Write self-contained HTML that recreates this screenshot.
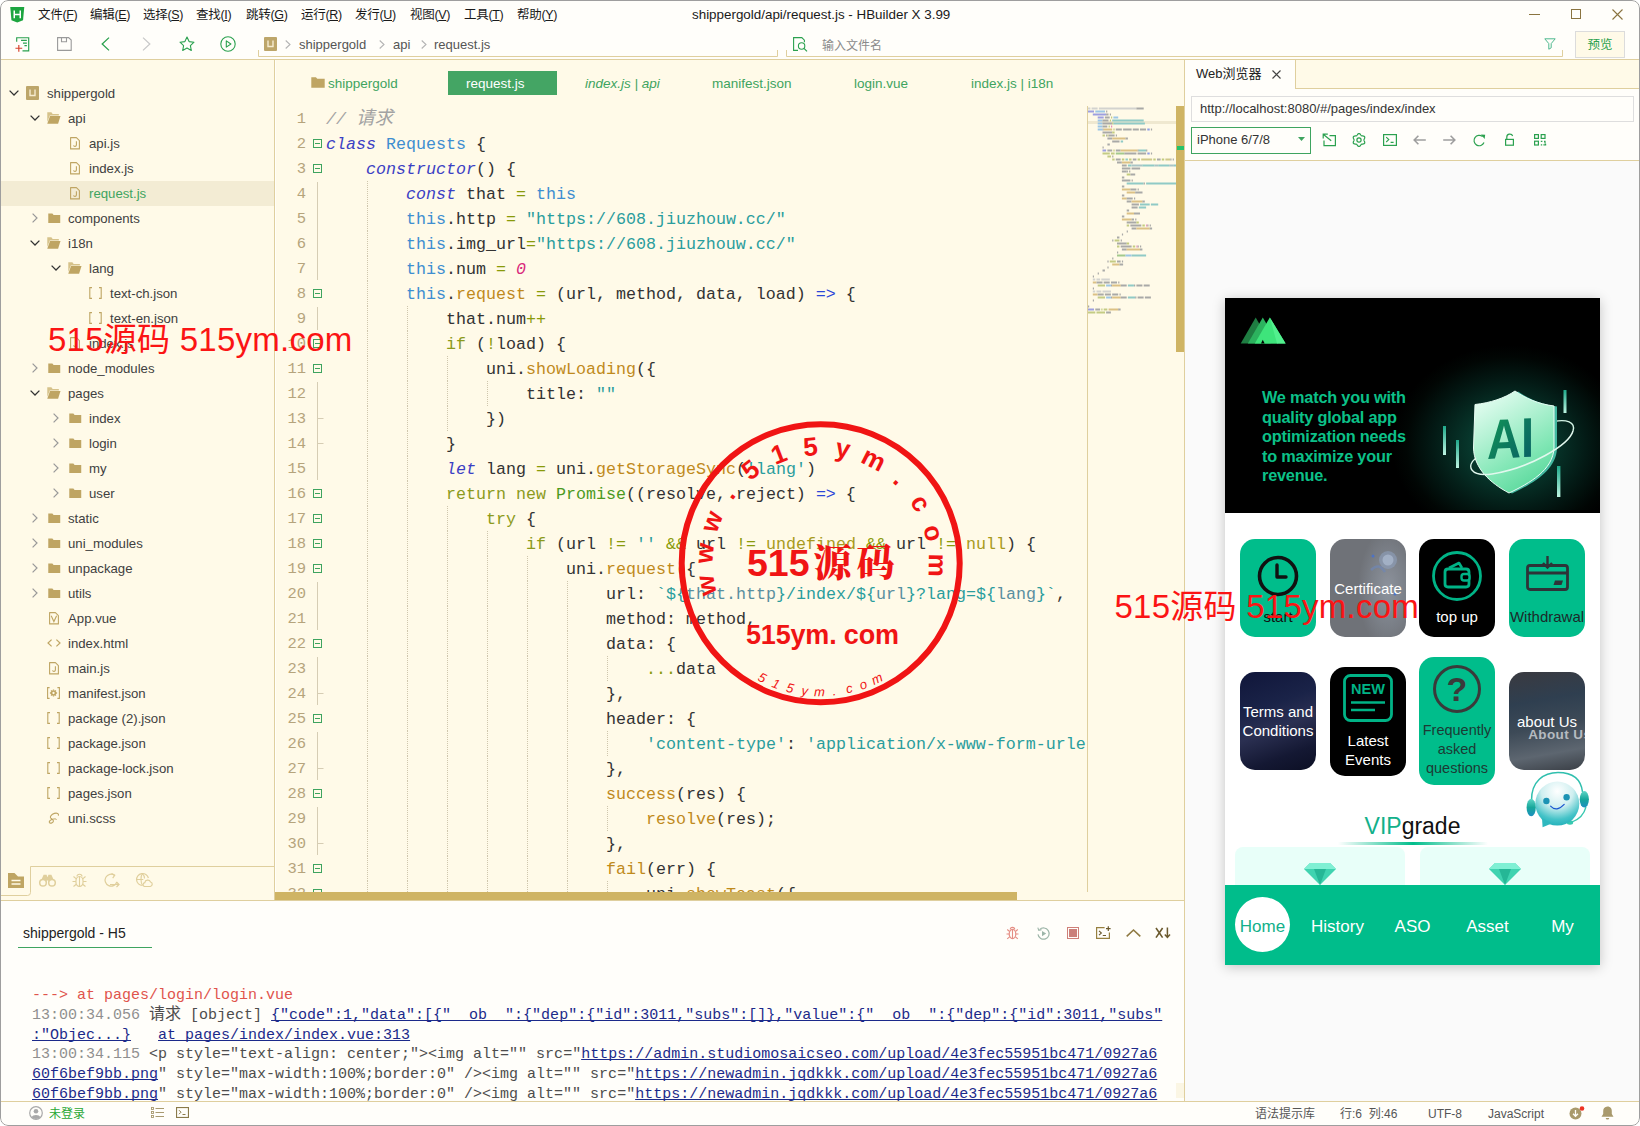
<!DOCTYPE html>
<html lang="zh"><head><meta charset="utf-8"><title>HBuilder X</title>
<style>
*{box-sizing:border-box;margin:0;padding:0}
html,body{width:1640px;height:1126px;overflow:hidden;background:#fff}
body{font-family:"Liberation Sans","Noto Sans CJK SC",sans-serif;font-size:13px;color:#333}
#win{position:relative;width:1640px;height:1126px;overflow:hidden;background:#fffefa;border-radius:8px}
.abs{position:absolute}
svg{position:absolute;overflow:visible}
/* top */
#titlebar{position:absolute;left:0;top:0;width:1640px;height:30px;background:#fffefa}
.menu{position:absolute;top:4px;font-size:12.5px;color:#1a1a1a;white-space:nowrap;letter-spacing:-0.3px}
#title{position:absolute;top:7px;left:692px;font-size:13.4px;color:#1a1a1a;white-space:nowrap}
#toolbar{position:absolute;left:0;top:30px;width:1640px;height:30px;background:#fffefa;border-bottom:1px solid #dfcf9e}
.crumb{position:absolute;top:37px;font-size:13px;color:#555;white-space:nowrap}
/* sidebar */
#sidebar{position:absolute;left:0;top:60px;width:275px;height:841px;background:#fffae8;border-right:1px solid #dfcf9e}
.tl{position:absolute;font-size:13.2px;line-height:25px;white-space:nowrap}
/* editor */
#editor{position:absolute;left:276px;top:60px;width:909px;height:841px;background:#fffae8}
.etab{position:absolute;top:71px;line-height:25px;font-size:13.5px;color:#3ea45f;white-space:nowrap}
#code{position:absolute;left:275px;top:106px;width:812px;height:786px;overflow:hidden;font-family:"Liberation Mono","Noto Sans CJK SC",monospace;font-size:16.67px;color:#333}
.ln{position:absolute;left:0;width:812px;height:25px;line-height:25px;white-space:pre}
.no{position:absolute;top:1px;left:0;width:31px;text-align:right;color:#b5a47c;font-size:15.5px}
.cd{position:absolute;top:1px}
.k{color:#3b3fc4;font-style:italic}
.c{color:#3e8ed0}
.o{color:#8a9a0a}
.f{color:#bf8a1c}
.s{color:#2a9d9d}
.s2{color:#5a8f9f}
.y{color:#8c9b1c}
.a{color:#2c46d8}
.n{color:#d9287c;font-style:italic}
.p{color:#4c9a1e}
.u{color:#a89a20}
.cm{color:#a3a3a3;font-style:italic}
/* browser */
#browser{position:absolute;left:1185px;top:60px;width:455px;height:1041px;background:#fffefa}
#phone{position:absolute;left:1225px;top:298px;width:375px;height:667px;background:#fff;overflow:hidden;box-shadow:0 2px 12px rgba(0,0,0,0.22)}
#phone svg{position:absolute}
.card{position:absolute;width:76px;height:98px;border-radius:15px}
.ct{position:absolute;width:76px;text-align:center;font-size:15px;line-height:19px;white-space:nowrap}
.nv{position:absolute;top:617px;width:75px;text-align:center;font-size:17px;line-height:24px;color:#fff}
/* console */
#console{position:absolute;left:0;top:900px;width:1184px;height:201px;background:#fffefa;border-top:1px solid #dfcf9e}
#log{position:absolute;left:32px;top:986px;width:1150px;font-family:"Liberation Mono","Noto Sans CJK SC",monospace;font-size:15px;line-height:19.75px;color:#4d4d4d}
#log div{height:19.75px;white-space:pre;overflow:visible}
.tm{color:#8f8f8f}
.lk{color:#1c2a8a;text-decoration:underline;text-decoration-skip-ink:none;text-underline-offset:1px}
#status{position:absolute;left:0;top:1101px;width:1640px;height:26px;background:#fffefa;border-top:1px solid #dfcf9e}
.st{position:absolute;top:1105px;font-size:12px;line-height:18px;color:#555;white-space:nowrap}
.wm{position:absolute;font-size:33px;line-height:44px;color:#fb1414;white-space:nowrap;letter-spacing:0.25px}

</style></head><body>
<div id="win">
<div id="titlebar">
<svg style="left:9.500px;top:7px" width="14.500" height="16" viewBox="0 0 14 16"><path d="M0 0h14l-1.2 13.2L7 15.6 1.2 13.2z" fill="#1da53f"/><path d="M4 3.6v7.6M10 3.6v7.6M4 7.4h6" stroke="#fff" stroke-width="1.5" fill="none"/></svg>
<span class="menu" style="left:38px">文件(<u>F</u>)</span>
<span class="menu" style="left:90px">编辑(<u>E</u>)</span>
<span class="menu" style="left:143px">选择(<u>S</u>)</span>
<span class="menu" style="left:196px">查找(<u>I</u>)</span>
<span class="menu" style="left:246px">跳转(<u>G</u>)</span>
<span class="menu" style="left:301px">运行(<u>R</u>)</span>
<span class="menu" style="left:355px">发行(<u>U</u>)</span>
<span class="menu" style="left:410px">视图(<u>V</u>)</span>
<span class="menu" style="left:464px">工具(<u>T</u>)</span>
<span class="menu" style="left:517px">帮助(<u>Y</u>)</span>
<span id="title">shippergold/api/request.js - HBuilder X 3.99</span>
<svg style="left:1529px;top:14px" width="11" height="1"><rect width="11" height="1" fill="#8a7440"/></svg>
<svg style="left:1571px;top:9px" width="10" height="10"><rect x="0.5" y="0.5" width="9" height="9" fill="none" stroke="#8a7440"/></svg>
<svg style="left:1612px;top:9px" width="11" height="11"><path d="M0.5 0.5l10 10M10.5 0.5l-10 10" stroke="#8a7440" stroke-width="1.1" fill="none"/></svg>
</div>
<div id="toolbar"></div>
<!-- toolbar icons -->
<svg style="left:15px;top:36.500px" width="15" height="15.500" viewBox="0 0 15 16"><path d="M1.5 5V0.8h12.4v13.6H7.5" fill="none" stroke="#2ba14f" stroke-width="1.2"/><path d="M6 3.6h6M8 6.4h4M9.5 9h2.5" stroke="#2ba14f" stroke-width="1.3" fill="none"/><path d="M0.2 11.6h7M3.7 8.2v7" stroke="#d8402c" stroke-width="1.2" fill="none"/></svg>
<svg style="left:57px;top:37px" width="15" height="14" viewBox="0 0 15 14"><path d="M0.6 0.6h11l2.6 2.4v10.4H0.6z" fill="none" stroke="#9a9a9a" stroke-width="1.1"/><path d="M4.5 0.6v4.2h5V0.6" fill="none" stroke="#9a9a9a" stroke-width="1.1"/></svg>
<svg style="left:101px;top:37px" width="9" height="14" viewBox="0 0 9 14"><path d="M8 0.6L1.2 7 8 13.4" fill="none" stroke="#2ba14f" stroke-width="1.3"/></svg>
<svg style="left:142px;top:37px" width="9" height="14" viewBox="0 0 9 14"><path d="M1 0.6L7.8 7 1 13.4" fill="none" stroke="#c9c9c9" stroke-width="1.3"/></svg>
<svg style="left:179px;top:36px" width="16" height="15" viewBox="0 0 16 15"><path d="M8 1l2.1 4.6 4.9.6-3.6 3.4.9 4.9L8 12.1l-4.3 2.4.9-4.9L1 6.2l4.9-.6z" fill="none" stroke="#2ba14f" stroke-width="1.1" stroke-linejoin="round"/></svg>
<svg style="left:220px;top:36px" width="16" height="16" viewBox="0 0 16 16"><circle cx="8" cy="8" r="7.2" fill="none" stroke="#2ba14f" stroke-width="1.1"/><path d="M6.3 4.9l4.6 3.1-4.6 3.1z" fill="none" stroke="#2ba14f" stroke-width="1.1" stroke-linejoin="round"/></svg>
<!-- breadcrumb -->
<svg style="left:258px;top:50px" width="520" height="7"><path d="M0.5 0v6.5h519V0" fill="none" stroke="#dfcf9e"/></svg>
<svg style="left:264px;top:37px" width="13" height="14"><rect width="13" height="14" rx="1" fill="#bda66a"/><path d="M4 3.5v6h5v-6" fill="none" stroke="#f6ecd0" stroke-width="1.4"/></svg>
<svg style="left:285px;top:40px" width="6" height="9" viewBox="0 0 6 9"><path d="M0.700 0.500L5 4.500 0.700 8.500" fill="none" stroke="#b4b4b4" stroke-width="1.100"/></svg>
<span class="crumb" style="left:299px">shippergold</span>
<svg style="left:379px;top:40px" width="6" height="9" viewBox="0 0 6 9"><path d="M0.700 0.500L5 4.500 0.700 8.500" fill="none" stroke="#b4b4b4" stroke-width="1.100"/></svg>
<span class="crumb" style="left:393px">api</span>
<svg style="left:421px;top:40px" width="6" height="9" viewBox="0 0 6 9"><path d="M0.700 0.500L5 4.500 0.700 8.500" fill="none" stroke="#b4b4b4" stroke-width="1.100"/></svg>
<span class="crumb" style="left:434px">request.js</span>
<!-- search -->
<svg style="left:786px;top:50px" width="777" height="7"><path d="M0.5 0v6.5h776V0" fill="none" stroke="#dfcf9e"/></svg>
<svg style="left:793px;top:37px" width="15" height="15" viewBox="0 0 15 15"><path d="M5 13.4H0.6V0.6h8.2l2.6 2.6v2" fill="none" stroke="#2ba14f" stroke-width="1.1"/><circle cx="8.6" cy="9" r="3.2" fill="none" stroke="#2ba14f" stroke-width="1.1"/><path d="M11 11.4l3 3" stroke="#2ba14f" stroke-width="1.2"/></svg>
<span class="crumb" style="left:822px;color:#8a8a8a;font-size:12px;top:36px">输入文件名</span>
<svg style="left:1544px;top:38px" width="12" height="12" viewBox="0 0 12 12"><path d="M0.8 0.8h10.4L7.2 5.6v4.2l-2.4 1.400V5.600z" fill="none" stroke="#4fb98f" stroke-width="1" stroke-linejoin="round"/></svg>
<div class="abs" style="left:1575px;top:31px;width:50px;height:27px;border:1px solid #dcdcdc;background:#fffae8;color:#2ba14f;font-size:12.5px;line-height:27px;text-align:center">预览</div>
<div id="sidebar"></div>
<svg style="left:9px;top:90px" width="10" height="6" viewBox="0 0 10 6"><path d="M0.6 0.6L5 5l4.4-4.4" fill="none" stroke="#333" stroke-width="1.3"/></svg>
<svg style="left:26px;top:86px" width="13" height="14"><rect width="13" height="14" rx="1" fill="#bda66a"/><path d="M4 3.5v6h5v-6" fill="none" stroke="#f6ecd0" stroke-width="1.4"/></svg>
<span class="tl" style="left:47px;top:81px;color:#404040">shippergold</span>
<svg style="left:30px;top:115px" width="10" height="6" viewBox="0 0 10 6"><path d="M0.6 0.6L5 5l4.4-4.4" fill="none" stroke="#333" stroke-width="1.3"/></svg>
<svg style="left:47px;top:112px" width="14" height="12" viewBox="0 0 15 11" preserveAspectRatio="none"><path d="M0.3 0.3h4.4l1.4 1.5h6.6v1.4H3l-2.7 6z" fill="#d6c28a"/><path d="M3.2 3.6h11.3l-2.6 7.1H0.3z" fill="#bfa563"/></svg>
<span class="tl" style="left:68px;top:106px;color:#404040">api</span>
<svg style="left:70px;top:137px" width="10" height="12.500" viewBox="0 0 10 12.500"><path d="M0.600 0.600h5.800l3 3v8.300H0.600z" fill="none" stroke="#bfa563" stroke-width="1.100" stroke-linejoin="round"/><path d="M6.400 4.200v3.900c0 1.500-2.300 1.700-3 .4" fill="none" stroke="#bfa563" stroke-width="1.100"/></svg>
<span class="tl" style="left:89px;top:131px;color:#404040">api.js</span>
<svg style="left:70px;top:162px" width="10" height="12.500" viewBox="0 0 10 12.500"><path d="M0.600 0.600h5.800l3 3v8.300H0.600z" fill="none" stroke="#bfa563" stroke-width="1.100" stroke-linejoin="round"/><path d="M6.400 4.200v3.900c0 1.500-2.300 1.700-3 .4" fill="none" stroke="#bfa563" stroke-width="1.100"/></svg>
<span class="tl" style="left:89px;top:156px;color:#404040">index.js</span>
<div class="abs" style="left:1px;top:181px;width:273px;height:25px;background:#f3ecd4"></div>
<svg style="left:70px;top:187px" width="10" height="12.500" viewBox="0 0 10 12.500"><path d="M0.600 0.600h5.800l3 3v8.300H0.600z" fill="none" stroke="#bfa563" stroke-width="1.100" stroke-linejoin="round"/><path d="M6.400 4.200v3.900c0 1.500-2.300 1.700-3 .4" fill="none" stroke="#bfa563" stroke-width="1.100"/></svg>
<span class="tl" style="left:89px;top:181px;color:#3ea45f">request.js</span>
<svg style="left:32px;top:213px" width="6" height="10" viewBox="0 0 6 10"><path d="M0.6 0.6L5 5 0.6 9.4" fill="none" stroke="#999" stroke-width="1.2"/></svg>
<svg style="left:48px;top:213px" width="12.500" height="10.500" viewBox="0 0 14 11"><path d="M0.3 0.3h4.6l1.4 1.5h7.4v8.9H0.3z" fill="#bfa563"/></svg>
<span class="tl" style="left:68px;top:206px;color:#404040">components</span>
<svg style="left:30px;top:240px" width="10" height="6" viewBox="0 0 10 6"><path d="M0.6 0.6L5 5l4.4-4.4" fill="none" stroke="#333" stroke-width="1.3"/></svg>
<svg style="left:47px;top:237px" width="14" height="12" viewBox="0 0 15 11" preserveAspectRatio="none"><path d="M0.3 0.3h4.4l1.4 1.5h6.6v1.4H3l-2.7 6z" fill="#d6c28a"/><path d="M3.2 3.6h11.3l-2.6 7.1H0.3z" fill="#bfa563"/></svg>
<span class="tl" style="left:68px;top:231px;color:#404040">i18n</span>
<svg style="left:51px;top:265px" width="10" height="6" viewBox="0 0 10 6"><path d="M0.6 0.6L5 5l4.4-4.4" fill="none" stroke="#333" stroke-width="1.3"/></svg>
<svg style="left:68px;top:262px" width="14" height="12" viewBox="0 0 15 11" preserveAspectRatio="none"><path d="M0.3 0.3h4.4l1.4 1.5h6.6v1.4H3l-2.7 6z" fill="#d6c28a"/><path d="M3.2 3.6h11.3l-2.6 7.1H0.3z" fill="#bfa563"/></svg>
<span class="tl" style="left:89px;top:256px;color:#404040">lang</span>
<svg style="left:89px;top:287px" width="13" height="12" viewBox="0 0 13 12"><path d="M3 0.6H0.8v10.8H3M10 0.6h2.2v10.8H10" fill="none" stroke="#bfa563" stroke-width="1.1"/></svg>
<span class="tl" style="left:110px;top:281px;color:#404040">text-ch.json</span>
<svg style="left:89px;top:312px" width="13" height="12" viewBox="0 0 13 12"><path d="M3 0.6H0.8v10.8H3M10 0.6h2.2v10.8H10" fill="none" stroke="#bfa563" stroke-width="1.1"/></svg>
<span class="tl" style="left:110px;top:306px;color:#404040">text-en.json</span>
<svg style="left:70px;top:337px" width="10" height="12.500" viewBox="0 0 10 12.500"><path d="M0.600 0.600h5.800l3 3v8.300H0.600z" fill="none" stroke="#bfa563" stroke-width="1.100" stroke-linejoin="round"/><path d="M6.400 4.200v3.900c0 1.500-2.300 1.700-3 .4" fill="none" stroke="#bfa563" stroke-width="1.100"/></svg>
<span class="tl" style="left:89px;top:331px;color:#404040">index.js</span>
<svg style="left:32px;top:363px" width="6" height="10" viewBox="0 0 6 10"><path d="M0.6 0.6L5 5 0.6 9.4" fill="none" stroke="#999" stroke-width="1.2"/></svg>
<svg style="left:48px;top:363px" width="12.500" height="10.500" viewBox="0 0 14 11"><path d="M0.3 0.3h4.6l1.4 1.5h7.4v8.9H0.3z" fill="#bfa563"/></svg>
<span class="tl" style="left:68px;top:356px;color:#404040">node_modules</span>
<svg style="left:30px;top:390px" width="10" height="6" viewBox="0 0 10 6"><path d="M0.6 0.6L5 5l4.4-4.4" fill="none" stroke="#333" stroke-width="1.3"/></svg>
<svg style="left:47px;top:387px" width="14" height="12" viewBox="0 0 15 11" preserveAspectRatio="none"><path d="M0.3 0.3h4.4l1.4 1.5h6.6v1.4H3l-2.7 6z" fill="#d6c28a"/><path d="M3.2 3.6h11.3l-2.6 7.1H0.3z" fill="#bfa563"/></svg>
<span class="tl" style="left:68px;top:381px;color:#404040">pages</span>
<svg style="left:53px;top:413px" width="6" height="10" viewBox="0 0 6 10"><path d="M0.6 0.6L5 5 0.6 9.4" fill="none" stroke="#999" stroke-width="1.2"/></svg>
<svg style="left:69px;top:413px" width="12.500" height="10.500" viewBox="0 0 14 11"><path d="M0.3 0.3h4.6l1.4 1.5h7.4v8.9H0.3z" fill="#bfa563"/></svg>
<span class="tl" style="left:89px;top:406px;color:#404040">index</span>
<svg style="left:53px;top:438px" width="6" height="10" viewBox="0 0 6 10"><path d="M0.6 0.6L5 5 0.6 9.4" fill="none" stroke="#999" stroke-width="1.2"/></svg>
<svg style="left:69px;top:438px" width="12.500" height="10.500" viewBox="0 0 14 11"><path d="M0.3 0.3h4.6l1.4 1.5h7.4v8.9H0.3z" fill="#bfa563"/></svg>
<span class="tl" style="left:89px;top:431px;color:#404040">login</span>
<svg style="left:53px;top:463px" width="6" height="10" viewBox="0 0 6 10"><path d="M0.6 0.6L5 5 0.6 9.4" fill="none" stroke="#999" stroke-width="1.2"/></svg>
<svg style="left:69px;top:463px" width="12.500" height="10.500" viewBox="0 0 14 11"><path d="M0.3 0.3h4.6l1.4 1.5h7.4v8.9H0.3z" fill="#bfa563"/></svg>
<span class="tl" style="left:89px;top:456px;color:#404040">my</span>
<svg style="left:53px;top:488px" width="6" height="10" viewBox="0 0 6 10"><path d="M0.6 0.6L5 5 0.6 9.4" fill="none" stroke="#999" stroke-width="1.2"/></svg>
<svg style="left:69px;top:488px" width="12.500" height="10.500" viewBox="0 0 14 11"><path d="M0.3 0.3h4.6l1.4 1.5h7.4v8.9H0.3z" fill="#bfa563"/></svg>
<span class="tl" style="left:89px;top:481px;color:#404040">user</span>
<svg style="left:32px;top:513px" width="6" height="10" viewBox="0 0 6 10"><path d="M0.6 0.6L5 5 0.6 9.4" fill="none" stroke="#999" stroke-width="1.2"/></svg>
<svg style="left:48px;top:513px" width="12.500" height="10.500" viewBox="0 0 14 11"><path d="M0.3 0.3h4.6l1.4 1.5h7.4v8.9H0.3z" fill="#bfa563"/></svg>
<span class="tl" style="left:68px;top:506px;color:#404040">static</span>
<svg style="left:32px;top:538px" width="6" height="10" viewBox="0 0 6 10"><path d="M0.6 0.6L5 5 0.6 9.4" fill="none" stroke="#999" stroke-width="1.2"/></svg>
<svg style="left:48px;top:538px" width="12.500" height="10.500" viewBox="0 0 14 11"><path d="M0.3 0.3h4.6l1.4 1.5h7.4v8.9H0.3z" fill="#bfa563"/></svg>
<span class="tl" style="left:68px;top:531px;color:#404040">uni_modules</span>
<svg style="left:32px;top:563px" width="6" height="10" viewBox="0 0 6 10"><path d="M0.6 0.6L5 5 0.6 9.4" fill="none" stroke="#999" stroke-width="1.2"/></svg>
<svg style="left:48px;top:563px" width="12.500" height="10.500" viewBox="0 0 14 11"><path d="M0.3 0.3h4.6l1.4 1.5h7.4v8.9H0.3z" fill="#bfa563"/></svg>
<span class="tl" style="left:68px;top:556px;color:#404040">unpackage</span>
<svg style="left:32px;top:588px" width="6" height="10" viewBox="0 0 6 10"><path d="M0.6 0.6L5 5 0.6 9.4" fill="none" stroke="#999" stroke-width="1.2"/></svg>
<svg style="left:48px;top:588px" width="12.500" height="10.500" viewBox="0 0 14 11"><path d="M0.3 0.3h4.6l1.4 1.5h7.4v8.9H0.3z" fill="#bfa563"/></svg>
<span class="tl" style="left:68px;top:581px;color:#404040">utils</span>
<svg style="left:49px;top:612px" width="10" height="12.500" viewBox="0 0 10 12.500"><path d="M0.600 0.600h5.800l3 3v8.300H0.600z" fill="none" stroke="#bfa563" stroke-width="1.100" stroke-linejoin="round"/><path d="M2.200 3.800l2.700 5.800 2.700-5.800" fill="none" stroke="#bfa563" stroke-width="1.100"/></svg>
<span class="tl" style="left:68px;top:606px;color:#404040">App.vue</span>
<svg style="left:47px;top:639px" width="14" height="8" viewBox="0 0 14 8"><path d="M4.6 0.6L1 4l3.6 3.4M9.4 0.6L13 4 9.4 7.4" fill="none" stroke="#bfa563" stroke-width="1.2"/></svg>
<span class="tl" style="left:68px;top:631px;color:#404040">index.html</span>
<svg style="left:49px;top:662px" width="10" height="12.500" viewBox="0 0 10 12.500"><path d="M0.600 0.600h5.800l3 3v8.300H0.600z" fill="none" stroke="#bfa563" stroke-width="1.100" stroke-linejoin="round"/><path d="M6.400 4.200v3.900c0 1.500-2.300 1.700-3 .4" fill="none" stroke="#bfa563" stroke-width="1.100"/></svg>
<span class="tl" style="left:68px;top:656px;color:#404040">main.js</span>
<svg style="left:47px;top:687px" width="13" height="12" viewBox="0 0 13 12"><path d="M2.600 0.600H0.600v10.800h2M10.400 0.600h2v10.800h-2" fill="none" stroke="#bfa563" stroke-width="1.100"/><circle cx="6.500" cy="6" r="1.900" fill="none" stroke="#bfa563" stroke-width="1.500"/><path d="M6.500 2.400v1.200M6.500 8.400v1.200M2.900 6h1.200M8.900 6h1.200M4 3.500l.9.900M8.100 7.600l.9.900M9 3.500l-.9.900M4.900 7.600l-.9.900" stroke="#bfa563" stroke-width="1.300"/></svg>
<span class="tl" style="left:68px;top:681px;color:#404040">manifest.json</span>
<svg style="left:47px;top:712px" width="13" height="12" viewBox="0 0 13 12"><path d="M3 0.6H0.8v10.8H3M10 0.6h2.2v10.8H10" fill="none" stroke="#bfa563" stroke-width="1.1"/></svg>
<span class="tl" style="left:68px;top:706px;color:#404040">package (2).json</span>
<svg style="left:47px;top:737px" width="13" height="12" viewBox="0 0 13 12"><path d="M3 0.6H0.8v10.8H3M10 0.6h2.2v10.8H10" fill="none" stroke="#bfa563" stroke-width="1.1"/></svg>
<span class="tl" style="left:68px;top:731px;color:#404040">package.json</span>
<svg style="left:47px;top:762px" width="13" height="12" viewBox="0 0 13 12"><path d="M3 0.6H0.8v10.8H3M10 0.6h2.2v10.8H10" fill="none" stroke="#bfa563" stroke-width="1.1"/></svg>
<span class="tl" style="left:68px;top:756px;color:#404040">package-lock.json</span>
<svg style="left:47px;top:787px" width="13" height="12" viewBox="0 0 13 12"><path d="M3 0.6H0.8v10.8H3M10 0.6h2.2v10.8H10" fill="none" stroke="#bfa563" stroke-width="1.1"/></svg>
<span class="tl" style="left:68px;top:781px;color:#404040">pages.json</span>
<svg style="left:47px;top:812px" width="13" height="13" viewBox="0 0 13 13"><path d="M11.4 3.2c.6-1.6-1.4-2.6-4-1.8-2.8.9-5 3.2-3.6 4.7 1 1 2.6 1.4 2.6 2.8 0 1.4-2.2 2.6-3.6 2-1.2-.6-.2-2.4 1.6-3.2" fill="none" stroke="#bfa563" stroke-width="1.1" stroke-linecap="round"/><path d="M5 7.5c2-.9 4.200-.7 4.600 0" fill="none" stroke="#bfa563" stroke-width="1"/></svg>
<span class="tl" style="left:68px;top:806px;color:#404040">uni.scss</span>
<svg style="left:0;top:866px" width="276" height="31"><path d="M0 29.5h27.500q3 0 3-3V0.5H275" fill="none" stroke="#dfcf9e"/></svg>
<svg style="left:8px;top:873px" width="16" height="15" viewBox="0 0 16 15"><path d="M0 0h6.500l3.500 3.500h6V15H0z" fill="#bfa563"/><path d="M3.500 7.500h9M3.500 11h9" stroke="#fffae8" stroke-width="1.600"/></svg>
<svg style="left:39px;top:874px" width="17" height="13" viewBox="0 0 17 13"><path d="M2.500 5.500L4.600 0.800h3l.6 2h.6l.6-2h3l2.100 4.700v3h-5.200V6.500H7.700v2H2.500z" fill="#e0cf9c"/><circle cx="4" cy="8.800" r="3.300" fill="#fffae8" stroke="#e0cf9c" stroke-width="1.500"/><circle cx="13" cy="8.800" r="3.300" fill="#fffae8" stroke="#e0cf9c" stroke-width="1.500"/></svg>
<svg style="left:72px;top:873px" width="15" height="15" viewBox="0 0 15 15"><ellipse cx="7.500" cy="8.500" rx="3.600" ry="5" fill="none" stroke="#e0cf9c" stroke-width="1.200"/><path d="M7.500 4v9.500M5 3.500c0-3 5-3 5 0M0.500 8.500h3.400M11.100 8.500h3.400M1.500 3.500l2.800 2.300M13.500 3.500l-2.800 2.300M1.500 13.500l2.800-2.300M13.500 13.500l-2.800-2.300" fill="none" stroke="#e0cf9c" stroke-width="1.100"/></svg>
<svg style="left:104px;top:873px" width="16" height="15" viewBox="0 0 16 15"><path d="M10.500 2.200A6 6 0 1 0 12.800 9" fill="none" stroke="#e0cf9c" stroke-width="1.200"/><path d="M7.500 0.600l3.200 1.700-2 2.800" fill="none" stroke="#e0cf9c" stroke-width="1.200"/><path d="M6 11.500h9M12.500 9l2.500 2.500-2.500 2.500" fill="none" stroke="#e0cf9c" stroke-width="1.200"/></svg>
<svg style="left:136px;top:873px" width="17" height="15" viewBox="0 0 17 15"><path d="M6.500 12.500A6 6 0 1 1 12.400 5" fill="none" stroke="#e0cf9c" stroke-width="1.200"/><path d="M0.800 6.500h6.500M6.500 0.600c-2 2-2 9.500 0 11.500M6.500 0.600c1.500 1.500 2 3.500 2 5" fill="none" stroke="#e0cf9c" stroke-width="1.100"/><path d="M8.500 13.500h5.800a2.300 2.300 0 0 0 .2-4.500 3 3 0 0 0-5.700.6 2 2 0 0 0-.3 3.900z" fill="#fffae8" stroke="#e0cf9c" stroke-width="1.200"/></svg>
<div id="editor"></div>
<svg style="left:311px;top:77px" width="14" height="11" viewBox="0 0 14 11"><path d="M0.3 0.3h4.600l1.400 1.500h7.400v8.900H0.300z" fill="#bfa563"/></svg>
<span class="etab" style="left:328px">shippergold</span>
<div class="abs" style="left:448px;top:71px;width:109px;height:24px;background:#44a564"></div>
<span class="etab" style="left:466px;color:#fff">request.js</span>
<span class="etab" style="left:585px;font-style:italic">index.js | api</span>
<span class="etab" style="left:712px">manifest.json</span>
<span class="etab" style="left:854px">login.vue</span>
<span class="etab" style="left:971px">index.js | i18n</span>
<div id="code">
<div class="ln" style="top:0px"><span class="no">1</span><span class="cd" style="left:51px"><span class="cm">// <span style="font-size:18.500px">请求</span></span></span></div>
<div class="ln" style="top:25px"><span class="no">2</span><span class="cd" style="left:51px"><span class="k">class</span> <span class="c">Requests</span> {</span></div>
<div class="ln" style="top:50px"><span class="no">3</span><span class="cd" style="left:91px"><span class="k">constructor</span>() {</span></div>
<div class="ln" style="top:75px"><span class="no">4</span><span class="cd" style="left:131px"><span class="k">const</span> that <span class="o">=</span> <span class="c">this</span></span></div>
<div class="ln" style="top:100px"><span class="no">5</span><span class="cd" style="left:131px"><span class="c">this</span>.http <span class="o">=</span> <span class="s">&quot;https://608.jiuzhouw.cc/&quot;</span></span></div>
<div class="ln" style="top:125px"><span class="no">6</span><span class="cd" style="left:131px"><span class="c">this</span>.img_url<span class="o">=</span><span class="s">&quot;https://608.jiuzhouw.cc/&quot;</span></span></div>
<div class="ln" style="top:150px"><span class="no">7</span><span class="cd" style="left:131px"><span class="c">this</span>.num <span class="o">=</span> <span class="n">0</span></span></div>
<div class="ln" style="top:175px"><span class="no">8</span><span class="cd" style="left:131px"><span class="c">this</span>.<span class="f">request</span> <span class="o">=</span> (url, method, data, load) <span class="a">=&gt;</span> {</span></div>
<div class="ln" style="top:200px"><span class="no">9</span><span class="cd" style="left:171px">that.num<span class="o">++</span></span></div>
<div class="ln" style="top:225px"><span class="no">10</span><span class="cd" style="left:171px"><span class="y">if</span> (<span class="o">!</span>load) {</span></div>
<div class="ln" style="top:250px"><span class="no">11</span><span class="cd" style="left:211px">uni.<span class="f">showLoading</span>({</span></div>
<div class="ln" style="top:275px"><span class="no">12</span><span class="cd" style="left:251px">title: <span class="s">&quot;&quot;</span></span></div>
<div class="ln" style="top:300px"><span class="no">13</span><span class="cd" style="left:211px">})</span></div>
<div class="ln" style="top:325px"><span class="no">14</span><span class="cd" style="left:171px">}</span></div>
<div class="ln" style="top:350px"><span class="no">15</span><span class="cd" style="left:171px"><span class="k">let</span> lang <span class="o">=</span> uni.<span class="f">getStorageSync</span>(<span class="s">&#x27;lang&#x27;</span>)</span></div>
<div class="ln" style="top:375px"><span class="no">16</span><span class="cd" style="left:171px"><span class="y">return</span> <span class="y">new</span> <span class="p">Promise</span>((resolve, reject) <span class="a">=&gt;</span> {</span></div>
<div class="ln" style="top:400px"><span class="no">17</span><span class="cd" style="left:211px"><span class="y">try</span> {</span></div>
<div class="ln" style="top:425px"><span class="no">18</span><span class="cd" style="left:251px"><span class="y">if</span> (url <span class="o">!=</span> <span class="s">&#x27;&#x27;</span> <span class="o">&amp;&amp;</span> url <span class="o">!=</span> <span class="u">undefined</span> <span class="o">&amp;&amp;</span> url <span class="o">!=</span> <span class="u">null</span>) {</span></div>
<div class="ln" style="top:450px"><span class="no">19</span><span class="cd" style="left:291px">uni.<span class="f">request</span>({</span></div>
<div class="ln" style="top:475px"><span class="no">20</span><span class="cd" style="left:331px">url: <span class="s">`${</span><span class="s2">that.http</span><span class="s">}/index/${</span><span class="s2">url</span><span class="s">}?lang=${</span><span class="s2">lang</span><span class="s">}`</span>,</span></div>
<div class="ln" style="top:500px"><span class="no">21</span><span class="cd" style="left:331px">method: method,</span></div>
<div class="ln" style="top:525px"><span class="no">22</span><span class="cd" style="left:331px">data<span class="d">:</span> {</span></div>
<div class="ln" style="top:550px"><span class="no">23</span><span class="cd" style="left:371px"><span class="o">...</span>data</span></div>
<div class="ln" style="top:575px"><span class="no">24</span><span class="cd" style="left:331px">},</span></div>
<div class="ln" style="top:600px"><span class="no">25</span><span class="cd" style="left:331px">header: {</span></div>
<div class="ln" style="top:625px"><span class="no">26</span><span class="cd" style="left:371px"><span class="s">&#x27;content-type&#x27;</span>: <span class="s">&#x27;application/x-www-form-urle</span></span></div>
<div class="ln" style="top:650px"><span class="no">27</span><span class="cd" style="left:331px">},</span></div>
<div class="ln" style="top:675px"><span class="no">28</span><span class="cd" style="left:331px"><span class="f">success</span>(res) {</span></div>
<div class="ln" style="top:700px"><span class="no">29</span><span class="cd" style="left:371px"><span class="f">resolve</span>(res);</span></div>
<div class="ln" style="top:725px"><span class="no">30</span><span class="cd" style="left:331px">},</span></div>
<div class="ln" style="top:750px"><span class="no">31</span><span class="cd" style="left:331px"><span class="f">fail</span>(err) {</span></div>
<div class="ln" style="top:775px"><span class="no">32</span><span class="cd" style="left:371px">uni.<span class="f">showToast</span>({</span></div>
</div>
<svg style="left:275px;top:106px" width="812" height="786" viewBox="0 0 812 786"><rect x="38.500" y="33.5" width="8" height="8" fill="#fffae8" stroke="#3ea45f"/><path d="M40 37.5h5" stroke="#3ea45f"/><rect x="38.500" y="58.5" width="8" height="8" fill="#fffae8" stroke="#3ea45f"/><path d="M40 62.5h5" stroke="#3ea45f"/><path d="M42.500 76V100" stroke="#d6cdb4"/><path d="M42.500 100V125" stroke="#d6cdb4"/><path d="M42.500 125V150" stroke="#d6cdb4"/><path d="M42.500 150V174" stroke="#d6cdb4"/><rect x="38.500" y="183.5" width="8" height="8" fill="#fffae8" stroke="#3ea45f"/><path d="M40 187.5h5" stroke="#3ea45f"/><path d="M42.500 201V224" stroke="#d6cdb4"/><rect x="38.500" y="233.5" width="8" height="8" fill="#fffae8" stroke="#3ea45f"/><path d="M40 237.5h5" stroke="#3ea45f"/><rect x="38.500" y="258.5" width="8" height="8" fill="#fffae8" stroke="#3ea45f"/><path d="M40 262.5h5" stroke="#3ea45f"/><path d="M42.500 276V300" stroke="#d6cdb4"/><path d="M42.500 300V325" stroke="#d6cdb4"/><path d="M42.500 312.5h6" stroke="#d6cdb4"/><path d="M42.500 325V350" stroke="#d6cdb4"/><path d="M42.500 337.5h6" stroke="#d6cdb4"/><path d="M42.500 350V374" stroke="#d6cdb4"/><rect x="38.500" y="383.5" width="8" height="8" fill="#fffae8" stroke="#3ea45f"/><path d="M40 387.5h5" stroke="#3ea45f"/><rect x="38.500" y="408.5" width="8" height="8" fill="#fffae8" stroke="#3ea45f"/><path d="M40 412.5h5" stroke="#3ea45f"/><rect x="38.500" y="433.5" width="8" height="8" fill="#fffae8" stroke="#3ea45f"/><path d="M40 437.5h5" stroke="#3ea45f"/><rect x="38.500" y="458.5" width="8" height="8" fill="#fffae8" stroke="#3ea45f"/><path d="M40 462.5h5" stroke="#3ea45f"/><path d="M42.500 476V500" stroke="#d6cdb4"/><path d="M42.500 500V524" stroke="#d6cdb4"/><rect x="38.500" y="533.5" width="8" height="8" fill="#fffae8" stroke="#3ea45f"/><path d="M40 537.5h5" stroke="#3ea45f"/><path d="M42.500 551V575" stroke="#d6cdb4"/><path d="M42.500 575V599" stroke="#d6cdb4"/><path d="M42.500 587.5h6" stroke="#d6cdb4"/><rect x="38.500" y="608.5" width="8" height="8" fill="#fffae8" stroke="#3ea45f"/><path d="M40 612.5h5" stroke="#3ea45f"/><path d="M42.500 626V650" stroke="#d6cdb4"/><path d="M42.500 650V674" stroke="#d6cdb4"/><path d="M42.500 662.5h6" stroke="#d6cdb4"/><rect x="38.500" y="683.5" width="8" height="8" fill="#fffae8" stroke="#3ea45f"/><path d="M40 687.5h5" stroke="#3ea45f"/><path d="M42.500 701V725" stroke="#d6cdb4"/><path d="M42.500 725V749" stroke="#d6cdb4"/><path d="M42.500 737.5h6" stroke="#d6cdb4"/><rect x="38.500" y="758.5" width="8" height="8" fill="#fffae8" stroke="#3ea45f"/><path d="M40 762.5h5" stroke="#3ea45f"/><rect x="38.500" y="783.5" width="8" height="8" fill="#fffae8" stroke="#3ea45f"/><path d="M40 787.5h5" stroke="#3ea45f"/><path d="M92.5 75v25" stroke="#cfc6ad" stroke-dasharray="1 1"/><path d="M92.5 100v25" stroke="#cfc6ad" stroke-dasharray="1 1"/><path d="M92.5 125v25" stroke="#cfc6ad" stroke-dasharray="1 1"/><path d="M92.5 150v25" stroke="#cfc6ad" stroke-dasharray="1 1"/><path d="M92.5 175v25" stroke="#cfc6ad" stroke-dasharray="1 1"/><path d="M92.5 200v25" stroke="#cfc6ad" stroke-dasharray="1 1"/><path d="M132.5 200v25" stroke="#cfc6ad" stroke-dasharray="1 1"/><path d="M92.5 225v25" stroke="#cfc6ad" stroke-dasharray="1 1"/><path d="M132.5 225v25" stroke="#cfc6ad" stroke-dasharray="1 1"/><path d="M92.5 250v25" stroke="#cfc6ad" stroke-dasharray="1 1"/><path d="M132.5 250v25" stroke="#cfc6ad" stroke-dasharray="1 1"/><path d="M172.5 250v25" stroke="#cfc6ad" stroke-dasharray="1 1"/><path d="M92.5 275v25" stroke="#cfc6ad" stroke-dasharray="1 1"/><path d="M132.5 275v25" stroke="#cfc6ad" stroke-dasharray="1 1"/><path d="M172.5 275v25" stroke="#cfc6ad" stroke-dasharray="1 1"/><path d="M212.5 275v25" stroke="#cfc6ad" stroke-dasharray="1 1"/><path d="M92.5 300v25" stroke="#cfc6ad" stroke-dasharray="1 1"/><path d="M132.5 300v25" stroke="#cfc6ad" stroke-dasharray="1 1"/><path d="M172.5 300v25" stroke="#cfc6ad" stroke-dasharray="1 1"/><path d="M92.5 325v25" stroke="#cfc6ad" stroke-dasharray="1 1"/><path d="M132.5 325v25" stroke="#cfc6ad" stroke-dasharray="1 1"/><path d="M92.5 350v25" stroke="#cfc6ad" stroke-dasharray="1 1"/><path d="M132.5 350v25" stroke="#cfc6ad" stroke-dasharray="1 1"/><path d="M92.5 375v25" stroke="#cfc6ad" stroke-dasharray="1 1"/><path d="M132.5 375v25" stroke="#cfc6ad" stroke-dasharray="1 1"/><path d="M92.5 400v25" stroke="#cfc6ad" stroke-dasharray="1 1"/><path d="M132.5 400v25" stroke="#cfc6ad" stroke-dasharray="1 1"/><path d="M172.5 400v25" stroke="#cfc6ad" stroke-dasharray="1 1"/><path d="M92.5 425v25" stroke="#cfc6ad" stroke-dasharray="1 1"/><path d="M132.5 425v25" stroke="#cfc6ad" stroke-dasharray="1 1"/><path d="M172.5 425v25" stroke="#cfc6ad" stroke-dasharray="1 1"/><path d="M212.5 425v25" stroke="#cfc6ad" stroke-dasharray="1 1"/><path d="M92.5 450v25" stroke="#cfc6ad" stroke-dasharray="1 1"/><path d="M132.5 450v25" stroke="#cfc6ad" stroke-dasharray="1 1"/><path d="M172.5 450v25" stroke="#cfc6ad" stroke-dasharray="1 1"/><path d="M212.5 450v25" stroke="#cfc6ad" stroke-dasharray="1 1"/><path d="M252.5 450v25" stroke="#cfc6ad" stroke-dasharray="1 1"/><path d="M92.5 475v25" stroke="#cfc6ad" stroke-dasharray="1 1"/><path d="M132.5 475v25" stroke="#cfc6ad" stroke-dasharray="1 1"/><path d="M172.5 475v25" stroke="#cfc6ad" stroke-dasharray="1 1"/><path d="M212.5 475v25" stroke="#cfc6ad" stroke-dasharray="1 1"/><path d="M252.5 475v25" stroke="#cfc6ad" stroke-dasharray="1 1"/><path d="M292.5 475v25" stroke="#cfc6ad" stroke-dasharray="1 1"/><path d="M92.5 500v25" stroke="#cfc6ad" stroke-dasharray="1 1"/><path d="M132.5 500v25" stroke="#cfc6ad" stroke-dasharray="1 1"/><path d="M172.5 500v25" stroke="#cfc6ad" stroke-dasharray="1 1"/><path d="M212.5 500v25" stroke="#cfc6ad" stroke-dasharray="1 1"/><path d="M252.5 500v25" stroke="#cfc6ad" stroke-dasharray="1 1"/><path d="M292.5 500v25" stroke="#cfc6ad" stroke-dasharray="1 1"/><path d="M92.5 525v25" stroke="#cfc6ad" stroke-dasharray="1 1"/><path d="M132.5 525v25" stroke="#cfc6ad" stroke-dasharray="1 1"/><path d="M172.5 525v25" stroke="#cfc6ad" stroke-dasharray="1 1"/><path d="M212.5 525v25" stroke="#cfc6ad" stroke-dasharray="1 1"/><path d="M252.5 525v25" stroke="#cfc6ad" stroke-dasharray="1 1"/><path d="M292.5 525v25" stroke="#cfc6ad" stroke-dasharray="1 1"/><path d="M92.5 550v25" stroke="#cfc6ad" stroke-dasharray="1 1"/><path d="M132.5 550v25" stroke="#cfc6ad" stroke-dasharray="1 1"/><path d="M172.5 550v25" stroke="#cfc6ad" stroke-dasharray="1 1"/><path d="M212.5 550v25" stroke="#cfc6ad" stroke-dasharray="1 1"/><path d="M252.5 550v25" stroke="#cfc6ad" stroke-dasharray="1 1"/><path d="M292.5 550v25" stroke="#cfc6ad" stroke-dasharray="1 1"/><path d="M332.5 550v25" stroke="#cfc6ad" stroke-dasharray="1 1"/><path d="M92.5 575v25" stroke="#cfc6ad" stroke-dasharray="1 1"/><path d="M132.5 575v25" stroke="#cfc6ad" stroke-dasharray="1 1"/><path d="M172.5 575v25" stroke="#cfc6ad" stroke-dasharray="1 1"/><path d="M212.5 575v25" stroke="#cfc6ad" stroke-dasharray="1 1"/><path d="M252.5 575v25" stroke="#cfc6ad" stroke-dasharray="1 1"/><path d="M292.5 575v25" stroke="#cfc6ad" stroke-dasharray="1 1"/><path d="M92.5 600v25" stroke="#cfc6ad" stroke-dasharray="1 1"/><path d="M132.5 600v25" stroke="#cfc6ad" stroke-dasharray="1 1"/><path d="M172.5 600v25" stroke="#cfc6ad" stroke-dasharray="1 1"/><path d="M212.5 600v25" stroke="#cfc6ad" stroke-dasharray="1 1"/><path d="M252.5 600v25" stroke="#cfc6ad" stroke-dasharray="1 1"/><path d="M292.5 600v25" stroke="#cfc6ad" stroke-dasharray="1 1"/><path d="M92.5 625v25" stroke="#cfc6ad" stroke-dasharray="1 1"/><path d="M132.5 625v25" stroke="#cfc6ad" stroke-dasharray="1 1"/><path d="M172.5 625v25" stroke="#cfc6ad" stroke-dasharray="1 1"/><path d="M212.5 625v25" stroke="#cfc6ad" stroke-dasharray="1 1"/><path d="M252.5 625v25" stroke="#cfc6ad" stroke-dasharray="1 1"/><path d="M292.5 625v25" stroke="#cfc6ad" stroke-dasharray="1 1"/><path d="M332.5 625v25" stroke="#cfc6ad" stroke-dasharray="1 1"/><path d="M92.5 650v25" stroke="#cfc6ad" stroke-dasharray="1 1"/><path d="M132.5 650v25" stroke="#cfc6ad" stroke-dasharray="1 1"/><path d="M172.5 650v25" stroke="#cfc6ad" stroke-dasharray="1 1"/><path d="M212.5 650v25" stroke="#cfc6ad" stroke-dasharray="1 1"/><path d="M252.5 650v25" stroke="#cfc6ad" stroke-dasharray="1 1"/><path d="M292.5 650v25" stroke="#cfc6ad" stroke-dasharray="1 1"/><path d="M92.5 675v25" stroke="#cfc6ad" stroke-dasharray="1 1"/><path d="M132.5 675v25" stroke="#cfc6ad" stroke-dasharray="1 1"/><path d="M172.5 675v25" stroke="#cfc6ad" stroke-dasharray="1 1"/><path d="M212.5 675v25" stroke="#cfc6ad" stroke-dasharray="1 1"/><path d="M252.5 675v25" stroke="#cfc6ad" stroke-dasharray="1 1"/><path d="M292.5 675v25" stroke="#cfc6ad" stroke-dasharray="1 1"/><path d="M92.5 700v25" stroke="#cfc6ad" stroke-dasharray="1 1"/><path d="M132.5 700v25" stroke="#cfc6ad" stroke-dasharray="1 1"/><path d="M172.5 700v25" stroke="#cfc6ad" stroke-dasharray="1 1"/><path d="M212.5 700v25" stroke="#cfc6ad" stroke-dasharray="1 1"/><path d="M252.5 700v25" stroke="#cfc6ad" stroke-dasharray="1 1"/><path d="M292.5 700v25" stroke="#cfc6ad" stroke-dasharray="1 1"/><path d="M332.5 700v25" stroke="#cfc6ad" stroke-dasharray="1 1"/><path d="M92.5 725v25" stroke="#cfc6ad" stroke-dasharray="1 1"/><path d="M132.5 725v25" stroke="#cfc6ad" stroke-dasharray="1 1"/><path d="M172.5 725v25" stroke="#cfc6ad" stroke-dasharray="1 1"/><path d="M212.5 725v25" stroke="#cfc6ad" stroke-dasharray="1 1"/><path d="M252.5 725v25" stroke="#cfc6ad" stroke-dasharray="1 1"/><path d="M292.5 725v25" stroke="#cfc6ad" stroke-dasharray="1 1"/><path d="M92.5 750v25" stroke="#cfc6ad" stroke-dasharray="1 1"/><path d="M132.5 750v25" stroke="#cfc6ad" stroke-dasharray="1 1"/><path d="M172.5 750v25" stroke="#cfc6ad" stroke-dasharray="1 1"/><path d="M212.5 750v25" stroke="#cfc6ad" stroke-dasharray="1 1"/><path d="M252.5 750v25" stroke="#cfc6ad" stroke-dasharray="1 1"/><path d="M292.5 750v25" stroke="#cfc6ad" stroke-dasharray="1 1"/><path d="M92.5 775v25" stroke="#cfc6ad" stroke-dasharray="1 1"/><path d="M132.5 775v25" stroke="#cfc6ad" stroke-dasharray="1 1"/><path d="M172.5 775v25" stroke="#cfc6ad" stroke-dasharray="1 1"/><path d="M212.5 775v25" stroke="#cfc6ad" stroke-dasharray="1 1"/><path d="M252.5 775v25" stroke="#cfc6ad" stroke-dasharray="1 1"/><path d="M292.5 775v25" stroke="#cfc6ad" stroke-dasharray="1 1"/><path d="M332.5 775v25" stroke="#cfc6ad" stroke-dasharray="1 1"/></svg>
<div class="abs" style="left:1088px;top:121px;width:88px;height:3px;background:#efe8d0"></div>
<svg style="left:1088px;top:106px" width="88" height="215" viewBox="0 0 88 215"><rect x="0.0" y="1.5" width="2.4" height="2" fill="#d3d3cf"/><rect x="3.6" y="1.5" width="6.0" height="2" fill="#d3d3cf"/><rect x="10.9" y="1.5" width="37.5" height="2" fill="#d3d3cf"/><rect x="48.4" y="1.5" width="7.3" height="2" fill="#a9a9a7"/><rect x="0.0" y="4.5" width="6.0" height="2" fill="#9d9fe0"/><rect x="7.3" y="4.5" width="9.7" height="2" fill="#9cc6e6"/><rect x="18.1" y="4.5" width="1.2" height="2" fill="#a9a9a7"/><rect x="4.8" y="7.5" width="13.3" height="2" fill="#9d9fe0"/><rect x="18.1" y="7.5" width="2.4" height="2" fill="#a9a9a7"/><rect x="21.8" y="7.5" width="1.2" height="2" fill="#a9a9a7"/><rect x="9.7" y="10.5" width="6.0" height="2" fill="#9d9fe0"/><rect x="16.9" y="10.5" width="4.8" height="2" fill="#a9a9a7"/><rect x="23.0" y="10.5" width="1.2" height="2" fill="#c3cc7e"/><rect x="25.4" y="10.5" width="4.8" height="2" fill="#9cc6e6"/><rect x="9.7" y="13.5" width="4.8" height="2" fill="#9cc6e6"/><rect x="14.5" y="13.5" width="6.0" height="2" fill="#a9a9a7"/><rect x="21.8" y="13.5" width="1.2" height="2" fill="#c3cc7e"/><rect x="24.2" y="13.5" width="31.5" height="2" fill="#90cac6"/><rect x="9.7" y="16.5" width="4.8" height="2" fill="#9cc6e6"/><rect x="14.5" y="16.5" width="9.7" height="2" fill="#a9a9a7"/><rect x="24.2" y="16.5" width="1.2" height="2" fill="#c3cc7e"/><rect x="25.4" y="16.5" width="31.5" height="2" fill="#90cac6"/><rect x="9.7" y="19.5" width="4.8" height="2" fill="#9cc6e6"/><rect x="14.5" y="19.5" width="4.8" height="2" fill="#a9a9a7"/><rect x="20.6" y="19.5" width="1.2" height="2" fill="#c3cc7e"/><rect x="23.0" y="19.5" width="1.2" height="2" fill="#e98fba"/><rect x="9.7" y="22.5" width="4.8" height="2" fill="#9cc6e6"/><rect x="14.5" y="22.5" width="1.2" height="2" fill="#a9a9a7"/><rect x="15.7" y="22.5" width="8.5" height="2" fill="#dcc185"/><rect x="25.4" y="22.5" width="1.2" height="2" fill="#c3cc7e"/><rect x="27.8" y="22.5" width="6.0" height="2" fill="#a9a9a7"/><rect x="35.1" y="22.5" width="8.5" height="2" fill="#a9a9a7"/><rect x="44.8" y="22.5" width="6.0" height="2" fill="#a9a9a7"/><rect x="52.0" y="22.5" width="6.0" height="2" fill="#a9a9a7"/><rect x="59.3" y="22.5" width="2.4" height="2" fill="#8f9de6"/><rect x="62.9" y="22.5" width="1.2" height="2" fill="#a9a9a7"/><rect x="14.5" y="25.5" width="9.7" height="2" fill="#a9a9a7"/><rect x="24.2" y="25.5" width="2.4" height="2" fill="#c3cc7e"/><rect x="14.5" y="28.5" width="2.4" height="2" fill="#c4cb84"/><rect x="18.1" y="28.5" width="1.2" height="2" fill="#a9a9a7"/><rect x="19.4" y="28.5" width="1.2" height="2" fill="#c3cc7e"/><rect x="20.6" y="28.5" width="6.0" height="2" fill="#a9a9a7"/><rect x="27.8" y="28.5" width="1.2" height="2" fill="#a9a9a7"/><rect x="19.4" y="31.5" width="4.8" height="2" fill="#a9a9a7"/><rect x="24.2" y="31.5" width="13.3" height="2" fill="#dcc185"/><rect x="37.5" y="31.5" width="2.4" height="2" fill="#a9a9a7"/><rect x="24.2" y="34.5" width="7.3" height="2" fill="#a9a9a7"/><rect x="32.7" y="34.5" width="2.4" height="2" fill="#90cac6"/><rect x="19.4" y="37.5" width="2.4" height="2" fill="#a9a9a7"/><rect x="14.5" y="40.5" width="1.2" height="2" fill="#a9a9a7"/><rect x="14.5" y="43.5" width="3.6" height="2" fill="#9d9fe0"/><rect x="19.4" y="43.5" width="4.8" height="2" fill="#a9a9a7"/><rect x="25.4" y="43.5" width="1.2" height="2" fill="#c3cc7e"/><rect x="27.8" y="43.5" width="4.8" height="2" fill="#a9a9a7"/><rect x="32.7" y="43.5" width="16.9" height="2" fill="#dcc185"/><rect x="49.6" y="43.5" width="1.2" height="2" fill="#a9a9a7"/><rect x="50.8" y="43.5" width="7.3" height="2" fill="#90cac6"/><rect x="58.1" y="43.5" width="1.2" height="2" fill="#a9a9a7"/><rect x="14.5" y="46.5" width="7.3" height="2" fill="#c4cb84"/><rect x="23.0" y="46.5" width="3.6" height="2" fill="#c4cb84"/><rect x="27.8" y="46.5" width="8.5" height="2" fill="#a3c98c"/><rect x="36.3" y="46.5" width="12.1" height="2" fill="#a9a9a7"/><rect x="49.6" y="46.5" width="8.5" height="2" fill="#a9a9a7"/><rect x="59.3" y="46.5" width="2.4" height="2" fill="#8f9de6"/><rect x="62.9" y="46.5" width="1.2" height="2" fill="#a9a9a7"/><rect x="19.4" y="49.5" width="3.6" height="2" fill="#c4cb84"/><rect x="24.2" y="49.5" width="1.2" height="2" fill="#a9a9a7"/><rect x="24.2" y="52.5" width="2.4" height="2" fill="#c4cb84"/><rect x="27.8" y="52.5" width="4.8" height="2" fill="#a9a9a7"/><rect x="33.9" y="52.5" width="2.4" height="2" fill="#c3cc7e"/><rect x="37.5" y="52.5" width="2.4" height="2" fill="#90cac6"/><rect x="41.1" y="52.5" width="2.4" height="2" fill="#c3cc7e"/><rect x="44.8" y="52.5" width="3.6" height="2" fill="#a9a9a7"/><rect x="49.6" y="52.5" width="2.4" height="2" fill="#c3cc7e"/><rect x="53.2" y="52.5" width="10.9" height="2" fill="#cfc88a"/><rect x="65.3" y="52.5" width="2.4" height="2" fill="#c3cc7e"/><rect x="69.0" y="52.5" width="3.6" height="2" fill="#a9a9a7"/><rect x="73.8" y="52.5" width="2.4" height="2" fill="#c3cc7e"/><rect x="77.4" y="52.5" width="4.8" height="2" fill="#cfc88a"/><rect x="82.3" y="52.5" width="1.2" height="2" fill="#a9a9a7"/><rect x="84.7" y="52.5" width="1.2" height="2" fill="#a9a9a7"/><rect x="29.0" y="55.5" width="4.8" height="2" fill="#a9a9a7"/><rect x="33.9" y="55.5" width="8.5" height="2" fill="#dcc185"/><rect x="42.4" y="55.5" width="2.4" height="2" fill="#a9a9a7"/><rect x="33.9" y="58.5" width="4.8" height="2" fill="#a9a9a7"/><rect x="39.9" y="58.5" width="3.6" height="2" fill="#90cac6"/><rect x="43.6" y="58.5" width="10.9" height="2" fill="#a9c4c6"/><rect x="54.4" y="58.5" width="12.1" height="2" fill="#90cac6"/><rect x="66.5" y="58.5" width="3.6" height="2" fill="#a9c4c6"/><rect x="70.2" y="58.5" width="10.9" height="2" fill="#90cac6"/><rect x="81.1" y="58.5" width="4.8" height="2" fill="#a9c4c6"/><rect x="85.9" y="58.5" width="2.1" height="2" fill="#90cac6"/><rect x="33.9" y="61.5" width="8.5" height="2" fill="#a9a9a7"/><rect x="43.6" y="61.5" width="8.5" height="2" fill="#a9a9a7"/><rect x="33.9" y="64.5" width="4.8" height="2" fill="#a9a9a7"/><rect x="38.7" y="64.5" width="1.2" height="2" fill="#a9a9a7"/><rect x="41.1" y="64.5" width="1.2" height="2" fill="#a9a9a7"/><rect x="38.7" y="67.5" width="3.6" height="2" fill="#c3cc7e"/><rect x="42.4" y="67.5" width="4.8" height="2" fill="#a9a9a7"/><rect x="33.9" y="70.5" width="2.4" height="2" fill="#a9a9a7"/><rect x="33.9" y="73.5" width="8.5" height="2" fill="#a9a9a7"/><rect x="43.6" y="73.5" width="1.2" height="2" fill="#a9a9a7"/><rect x="38.7" y="76.5" width="16.9" height="2" fill="#90cac6"/><rect x="55.7" y="76.5" width="1.2" height="2" fill="#a9a9a7"/><rect x="58.1" y="76.5" width="29.9" height="2" fill="#90cac6"/><rect x="33.9" y="79.5" width="2.4" height="2" fill="#a9a9a7"/><rect x="33.9" y="82.5" width="8.5" height="2" fill="#dcc185"/><rect x="42.4" y="82.5" width="6.0" height="2" fill="#a9a9a7"/><rect x="49.6" y="82.5" width="1.2" height="2" fill="#a9a9a7"/><rect x="38.7" y="85.5" width="8.5" height="2" fill="#dcc185"/><rect x="47.2" y="85.5" width="7.3" height="2" fill="#a9a9a7"/><rect x="33.9" y="88.5" width="2.4" height="2" fill="#a9a9a7"/><rect x="33.9" y="91.5" width="4.8" height="2" fill="#dcc185"/><rect x="38.7" y="91.5" width="6.0" height="2" fill="#a9a9a7"/><rect x="46.0" y="91.5" width="1.2" height="2" fill="#a9a9a7"/><rect x="38.7" y="94.5" width="4.8" height="2" fill="#a9a9a7"/><rect x="43.6" y="94.5" width="10.9" height="2" fill="#dcc185"/><rect x="54.4" y="94.5" width="2.4" height="2" fill="#a9a9a7"/><rect x="43.6" y="97.5" width="7.3" height="2" fill="#a9a9a7"/><rect x="52.0" y="97.5" width="9.7" height="2" fill="#90cac6"/><rect x="62.9" y="97.5" width="7.3" height="2" fill="#90cac6"/><rect x="43.6" y="100.5" width="6.0" height="2" fill="#a9a9a7"/><rect x="50.8" y="100.5" width="7.3" height="2" fill="#90cac6"/><rect x="38.7" y="103.5" width="2.4" height="2" fill="#a9a9a7"/><rect x="38.7" y="106.5" width="7.3" height="2" fill="#dcc185"/><rect x="46.0" y="106.5" width="6.0" height="2" fill="#a9a9a7"/><rect x="33.9" y="109.5" width="2.4" height="2" fill="#a9a9a7"/><rect x="33.9" y="112.5" width="9.7" height="2" fill="#dcc185"/><rect x="43.6" y="112.5" width="2.4" height="2" fill="#a9a9a7"/><rect x="47.2" y="112.5" width="1.2" height="2" fill="#a9a9a7"/><rect x="38.7" y="115.5" width="9.7" height="2" fill="#a9a9a7"/><rect x="48.4" y="115.5" width="2.4" height="2" fill="#c3cc7e"/><rect x="38.7" y="118.5" width="2.4" height="2" fill="#c4cb84"/><rect x="42.4" y="118.5" width="10.9" height="2" fill="#a9a9a7"/><rect x="54.4" y="118.5" width="2.4" height="2" fill="#c3cc7e"/><rect x="58.1" y="118.5" width="1.2" height="2" fill="#e98fba"/><rect x="59.3" y="118.5" width="1.2" height="2" fill="#a9a9a7"/><rect x="61.7" y="118.5" width="1.2" height="2" fill="#a9a9a7"/><rect x="43.6" y="121.5" width="4.8" height="2" fill="#a9a9a7"/><rect x="48.4" y="121.5" width="13.3" height="2" fill="#dcc185"/><rect x="61.7" y="121.5" width="2.4" height="2" fill="#a9a9a7"/><rect x="38.7" y="124.5" width="1.2" height="2" fill="#a9a9a7"/><rect x="33.9" y="127.5" width="1.2" height="2" fill="#a9a9a7"/><rect x="29.0" y="130.5" width="2.4" height="2" fill="#a9a9a7"/><rect x="24.2" y="133.5" width="1.2" height="2" fill="#a9a9a7"/><rect x="26.6" y="133.5" width="4.8" height="2" fill="#c4cb84"/><rect x="32.7" y="133.5" width="1.2" height="2" fill="#a9a9a7"/><rect x="29.0" y="136.5" width="9.7" height="2" fill="#a9a9a7"/><rect x="38.7" y="136.5" width="2.4" height="2" fill="#c3cc7e"/><rect x="29.0" y="139.5" width="2.4" height="2" fill="#c4cb84"/><rect x="32.7" y="139.5" width="10.9" height="2" fill="#a9a9a7"/><rect x="44.8" y="139.5" width="2.4" height="2" fill="#c3cc7e"/><rect x="48.4" y="139.5" width="1.2" height="2" fill="#e98fba"/><rect x="49.6" y="139.5" width="1.2" height="2" fill="#a9a9a7"/><rect x="52.0" y="139.5" width="1.2" height="2" fill="#a9a9a7"/><rect x="33.9" y="142.5" width="4.8" height="2" fill="#a9a9a7"/><rect x="38.7" y="142.5" width="13.3" height="2" fill="#dcc185"/><rect x="52.0" y="142.5" width="2.4" height="2" fill="#a9a9a7"/><rect x="29.0" y="145.5" width="1.2" height="2" fill="#a9a9a7"/><rect x="29.0" y="148.5" width="8.5" height="2" fill="#a3c98c"/><rect x="37.5" y="148.5" width="6.0" height="2" fill="#9cc6e6"/><rect x="43.6" y="148.5" width="14.5" height="2" fill="#90cac6"/><rect x="24.2" y="151.5" width="1.2" height="2" fill="#a9a9a7"/><rect x="19.4" y="154.5" width="1.2" height="2" fill="#a9a9a7"/><rect x="21.8" y="154.5" width="6.0" height="2" fill="#c4cb84"/><rect x="29.0" y="154.5" width="3.6" height="2" fill="#a9a9a7"/><rect x="33.9" y="154.5" width="1.2" height="2" fill="#a9a9a7"/><rect x="24.2" y="157.5" width="7.3" height="2" fill="#dcc185"/><rect x="31.5" y="157.5" width="3.6" height="2" fill="#a9a9a7"/><rect x="19.4" y="160.5" width="1.2" height="2" fill="#a9a9a7"/><rect x="14.5" y="163.5" width="2.4" height="2" fill="#a9a9a7"/><rect x="9.7" y="166.5" width="1.2" height="2" fill="#a9a9a7"/><rect x="4.8" y="169.5" width="1.2" height="2" fill="#a9a9a7"/><rect x="4.8" y="172.5" width="2.4" height="2" fill="#d3d3cf"/><rect x="8.5" y="172.5" width="3.6" height="2" fill="#d3d3cf"/><rect x="13.3" y="172.5" width="8.5" height="2" fill="#d3d3cf"/><rect x="4.8" y="175.5" width="3.6" height="2" fill="#dcc185"/><rect x="8.5" y="175.5" width="6.0" height="2" fill="#a9a9a7"/><rect x="15.7" y="175.5" width="6.0" height="2" fill="#a9a9a7"/><rect x="23.0" y="175.5" width="6.0" height="2" fill="#a9a9a7"/><rect x="30.2" y="175.5" width="1.2" height="2" fill="#a9a9a7"/><rect x="9.7" y="178.5" width="7.3" height="2" fill="#c4cb84"/><rect x="18.1" y="178.5" width="4.8" height="2" fill="#9cc6e6"/><rect x="23.0" y="178.5" width="1.2" height="2" fill="#a9a9a7"/><rect x="24.2" y="178.5" width="8.5" height="2" fill="#dcc185"/><rect x="32.7" y="178.5" width="6.0" height="2" fill="#a9a9a7"/><rect x="39.9" y="178.5" width="6.0" height="2" fill="#90cac6"/><rect x="46.0" y="178.5" width="1.2" height="2" fill="#a9a9a7"/><rect x="48.4" y="178.5" width="6.0" height="2" fill="#a9a9a7"/><rect x="55.7" y="178.5" width="6.0" height="2" fill="#a9a9a7"/><rect x="4.8" y="181.5" width="1.2" height="2" fill="#a9a9a7"/><rect x="4.8" y="184.5" width="2.4" height="2" fill="#d3d3cf"/><rect x="8.5" y="184.5" width="4.8" height="2" fill="#d3d3cf"/><rect x="14.5" y="184.5" width="8.5" height="2" fill="#d3d3cf"/><rect x="4.8" y="187.5" width="4.8" height="2" fill="#dcc185"/><rect x="9.7" y="187.5" width="6.0" height="2" fill="#a9a9a7"/><rect x="16.9" y="187.5" width="6.0" height="2" fill="#a9a9a7"/><rect x="24.2" y="187.5" width="6.0" height="2" fill="#a9a9a7"/><rect x="31.5" y="187.5" width="1.2" height="2" fill="#a9a9a7"/><rect x="9.7" y="190.5" width="7.3" height="2" fill="#c4cb84"/><rect x="18.1" y="190.5" width="4.8" height="2" fill="#9cc6e6"/><rect x="23.0" y="190.5" width="1.2" height="2" fill="#a9a9a7"/><rect x="24.2" y="190.5" width="8.5" height="2" fill="#dcc185"/><rect x="32.7" y="190.5" width="6.0" height="2" fill="#a9a9a7"/><rect x="39.9" y="190.5" width="7.3" height="2" fill="#90cac6"/><rect x="47.2" y="190.5" width="1.2" height="2" fill="#a9a9a7"/><rect x="49.6" y="190.5" width="6.0" height="2" fill="#a9a9a7"/><rect x="56.9" y="190.5" width="6.0" height="2" fill="#a9a9a7"/><rect x="4.8" y="193.5" width="1.2" height="2" fill="#a9a9a7"/><rect x="0.0" y="199.5" width="1.2" height="2" fill="#a9a9a7"/><rect x="0.0" y="202.5" width="6.0" height="2" fill="#9d9fe0"/><rect x="7.3" y="202.5" width="4.8" height="2" fill="#a9a9a7"/><rect x="13.3" y="202.5" width="1.2" height="2" fill="#c3cc7e"/><rect x="15.7" y="202.5" width="3.6" height="2" fill="#c4cb84"/><rect x="20.6" y="202.5" width="9.7" height="2" fill="#dcc185"/><rect x="30.2" y="202.5" width="2.4" height="2" fill="#a9a9a7"/><rect x="0.0" y="205.5" width="7.3" height="2" fill="#c4cb84"/><rect x="8.5" y="205.5" width="8.5" height="2" fill="#c4cb84"/><rect x="18.1" y="205.5" width="4.8" height="2" fill="#a9a9a7"/></svg>
<div class="abs" style="left:275px;top:892px;width:742px;height:8px;background:#cfb464"></div>
<div class="abs" style="left:1087px;top:106px;width:1px;height:786px;background:#dfcf9e"></div>
<div class="abs" style="left:1176px;top:106px;width:8px;height:246px;background:#cfb464"></div>
<div class="abs" style="left:1177px;top:146px;width:7px;height:4px;background:#25c26a"></div>
<div class="abs" style="left:1184px;top:60px;width:1px;height:1041px;background:#dfcf9e"></div>
<div id="browser"></div>
<div class="abs" style="left:1185px;top:60px;width:455px;height:29px;background:#fffae8;border-bottom:1px solid #dfcf9e"></div>
<div class="abs" style="left:1185px;top:60px;width:111px;height:29px;background:#fffefa;border-right:1px solid #dfcf9e"></div>
<span class="abs" style="left:1196px;top:65px;font-size:13px;line-height:18px;color:#222;white-space:nowrap">Web浏览器</span>
<svg style="left:1272px;top:70px" width="9" height="9"><path d="M0.5 0.5l8 8M8.500 0.500l-8 8" stroke="#444" stroke-width="1.1"/></svg>
<div class="abs" style="left:1191px;top:96px;width:443px;height:26px;border:1px solid #dedede;background:#fffefa"></div>
<span class="abs" style="left:1200px;top:100px;font-size:13px;line-height:18px;color:#333;white-space:nowrap">http://localhost:8080/#/pages/index/index</span>
<div class="abs" style="left:1191px;top:127px;width:120px;height:27px;border:1px solid #3ea45f;background:#fffefa"></div>
<span class="abs" style="left:1197px;top:131px;font-size:13px;line-height:18px;color:#333;white-space:nowrap">iPhone 6/7/8</span>
<svg style="left:1298px;top:137px" width="7" height="4"><path d="M0 0h7L3.500 4z" fill="#3ea45f"/></svg>
<!-- browser toolbar icons -->
<svg style="left:1322px;top:133px" width="15" height="14" viewBox="0 0 15 14"><path d="M7.500 2.600H13.400V12.600H2V7.500" fill="none" stroke="#2ba14f" stroke-width="1.200"/><path d="M1.200 1.200l8 6.600M1.200 5.600V1.200H5.800" fill="none" stroke="#2ba14f" stroke-width="1.200"/></svg>
<svg style="left:1352px;top:133px" width="14" height="14" viewBox="0 0 14 14"><circle cx="7" cy="7" r="2.100" fill="none" stroke="#2ba14f" stroke-width="1.200"/><path d="M7.00 0.55 L7.55 0.67 L8.05 1.02 L8.48 1.49 L8.82 2.00 L9.13 2.42 L9.47 2.71 L9.90 2.86 L10.42 2.92 L11.03 2.97 L11.65 3.10 L12.20 3.36 L12.59 3.77 L12.75 4.32 L12.71 4.92 L12.51 5.52 L12.24 6.08 L12.03 6.56 L11.95 7.00 L12.03 7.44 L12.24 7.92 L12.51 8.48 L12.71 9.08 L12.75 9.68 L12.59 10.22 L12.20 10.64 L11.65 10.90 L11.03 11.03 L10.42 11.08 L9.90 11.14 L9.48 11.29 L9.13 11.58 L8.82 12.00 L8.48 12.51 L8.05 12.98 L7.55 13.33 L7.00 13.45 L6.45 13.33 L5.95 12.98 L5.52 12.51 L5.18 12.00 L4.87 11.58 L4.52 11.29 L4.10 11.14 L3.58 11.08 L2.97 11.03 L2.35 10.90 L1.80 10.64 L1.41 10.23 L1.25 9.68 L1.29 9.08 L1.49 8.48 L1.76 7.92 L1.97 7.44 L2.05 7.00 L1.97 6.56 L1.76 6.08 L1.49 5.52 L1.29 4.92 L1.25 4.32 L1.41 3.78 L1.80 3.36 L2.35 3.10 L2.97 2.97 L3.58 2.92 L4.10 2.86 L4.53 2.71 L4.87 2.42 L5.18 2.00 L5.52 1.49 L5.95 1.02 L6.45 0.67Z" fill="none" stroke="#2ba14f" stroke-width="1.200" stroke-linejoin="round"/></svg>
<svg style="left:1383px;top:134px" width="14" height="12" viewBox="0 0 14 12"><rect x="0.600" y="0.600" width="12.800" height="10.800" fill="none" stroke="#2ba14f" stroke-width="1.200"/><path d="M3.200 3.200l2.600 2.400-2.600 2.400M7.600 8.400h3" fill="none" stroke="#2ba14f" stroke-width="1.100"/></svg>
<svg style="left:1413px;top:135px" width="13" height="10" viewBox="0 0 13 10"><path d="M12.800 5H1.400M5.400 0.800L1.200 5l4.200 4.200" fill="none" stroke="#9e9e9e" stroke-width="1.600"/></svg>
<svg style="left:1443px;top:135px" width="13" height="10" viewBox="0 0 13 10"><path d="M0.200 5h11.400M7.600 0.800L11.800 5 7.600 9.200" fill="none" stroke="#9e9e9e" stroke-width="1.600"/></svg>
<svg style="left:1473px;top:134px" width="13" height="13" viewBox="0 0 13 13"><path d="M11 8.600A5.200 5.200 0 1 1 9.600 2.600" fill="none" stroke="#2ba14f" stroke-width="1.200"/><path d="M8 0.600l4.200.2-.6 4.200z" fill="#2ba14f"/></svg>
<svg style="left:1505px;top:133px" width="10" height="13" viewBox="0 0 10 13"><rect x="0.600" y="6.400" width="7.800" height="5.800" fill="none" stroke="#2ba14f" stroke-width="1.200"/><path d="M1.800 6.400V4c0-3.600 5-3.600 5.800-1" fill="none" stroke="#2ba14f" stroke-width="1.200"/></svg>
<svg style="left:1534px;top:134px" width="12" height="12" viewBox="0 0 12 12"><rect x="0.600" y="0.600" width="3.800" height="3.800" fill="none" stroke="#2ba14f" stroke-width="1.200"/><rect x="7.200" y="0.600" width="3.800" height="3.800" fill="none" stroke="#2ba14f" stroke-width="1.200"/><rect x="0.600" y="7.200" width="3.800" height="3.800" fill="none" stroke="#2ba14f" stroke-width="1.200"/><path d="M6.800 7.400h1.600M10 7.400h1.600M11 8v1.400M6.800 10.800h1.400M9.400 10.800H11.600V9.800" fill="none" stroke="#2ba14f" stroke-width="1.200"/></svg>
<div class="abs" style="left:1185px;top:160px;width:455px;height:941px;background:#fafafa;border-top:1px solid #dfcf9e"></div>
<div id="phone">
<div class="abs" style="left:0;top:0;width:375px;height:215px;background:#000"></div>
<div class="abs" style="left:120px;top:20px;width:255px;height:192px;background:radial-gradient(ellipse 118px 100px at 165px 127px,#0a4a3a 0%,#07362b 35%,#031a15 65%,#010604 88%,#000 100%)"></div>
<!-- logo -->
<svg style="left:15px;top:19px" width="47" height="27" viewBox="0 0 47 27"><path d="M15.700 0.400L0.700 26.400h30z" fill="#1f7d42"/><path d="M22.800 0.400L7.800 26.400h30z" fill="#2cb25e"/><path d="M29.800 0.400L14.800 26.400h30.800z" fill="#3ee47b"/><path d="M29.800 0.400L45.600 26.400H37z" fill="#52f08e"/><path d="M22.800 22.800l-1.800 3.600h3.600z" fill="#000"/></svg>
<div class="abs" style="left:37px;top:90px;width:200px;font-size:16.300px;line-height:19.500px;font-weight:bold;color:#0cc088;letter-spacing:-0.200px;white-space:nowrap">We match you with<br>quality global app<br>optimization needs<br>to maximize your<br>revenue.</div>
<!-- shield -->
<svg style="left:205px;top:88px" width="170" height="122" viewBox="0 0 170 122">
<defs><linearGradient id="sh" x1="0.200" y1="0" x2="0.700" y2="1"><stop offset="0" stop-color="#e6fdf2"/><stop offset="0.350" stop-color="#b4f2d4"/><stop offset="0.700" stop-color="#7fe6b4"/><stop offset="1" stop-color="#57d79a"/></linearGradient><linearGradient id="ai" x1="0" y1="0" x2="1" y2="1"><stop offset="0" stop-color="#139a55"/><stop offset="1" stop-color="#065a66"/></linearGradient><linearGradient id="stk" x1="0" y1="0" x2="0" y2="1"><stop offset="0" stop-color="#1fa88a"/><stop offset="1" stop-color="#bdf5e2"/></linearGradient></defs>
<rect x="13" y="40" width="3" height="29" fill="url(#stk)"/><rect x="26" y="54" width="3" height="28" fill="url(#stk)"/><rect x="133.500" y="4" width="3" height="23" fill="url(#stk)"/><rect x="127" y="80" width="3.400" height="31" fill="url(#stk)"/>
<path d="M124 35.500C136 33 146 36 143 45" fill="none" stroke="#d4f5e6" stroke-width="1.400"/>
<path d="M88 5.500C78 12.500 63 17.500 48 19L46.500 62.500C47 82.500 63 97.500 82 107.500 103 97.500 126 84.500 127 62.500L127 20.500C111 18.500 98 12.500 88 5.500Z" fill="#43b8a0"/>
<path d="M85 5C75 12 60 17 45 18.500L43.500 62C44 82 60 97 79 107 100 97 123 84 124 62L124 20C108 18 95 12 85 5Z" fill="url(#sh)" stroke="#e9fdf4" stroke-width="1"/>
<text x="57" y="76" font-family="Liberation Sans,sans-serif" font-weight="bold" font-size="56" fill="url(#ai)" textLength="47" lengthAdjust="spacingAndGlyphs" transform="skewY(-3)">AI</text>
<path d="M143 45C139 59 100 82 62 88 40 91 36 80 46 72" fill="none" stroke="#e2f8ee" stroke-width="1.500"/>
</svg>
<!-- grid row 1 -->
<div class="card" style="left:15px;top:241px;background:#00bd8b"></div>
<svg style="left:32px;top:257px" width="42" height="42" viewBox="0 0 42 42"><circle cx="21" cy="21" r="18.500" fill="none" stroke="#111" stroke-width="3.600"/><path d="M20 10v12h9" fill="none" stroke="#111" stroke-width="3.400" stroke-linecap="round" stroke-linejoin="round"/></svg>
<div class="ct" style="left:15px;top:309px;color:#111">start</div>
<div class="card" style="left:105px;top:241px;background:radial-gradient(ellipse 30px 60px at 58px 50px,#8d939d 0%,#7b8088 60%,rgba(111,114,120,0) 100%),#6f7278"></div>
<svg style="left:140px;top:246px" width="40" height="60" viewBox="0 0 40 60"><circle cx="23" cy="16" r="9" fill="#8c9bb5" opacity="0.700"/><circle cx="23" cy="16" r="5.500" fill="#a9b6cc" opacity="0.800"/><path d="M6 26c6-6 10-4 14 2" stroke="#6f86b3" stroke-width="2.500" fill="none" opacity="0.700"/><circle cx="8" cy="12" r="1.500" fill="#4d72c4"/><circle cx="30" cy="50" r="1.500" fill="#4d72c4"/></svg>
<div class="ct" style="left:105px;top:281px;color:#fff">Certificate</div>
<div class="card" style="left:194px;top:241px;background:#000"></div>
<svg style="left:206px;top:252px" width="52" height="52" viewBox="0 0 52 52"><circle cx="26" cy="26" r="23.500" fill="none" stroke="#00b386" stroke-width="2.800"/><path d="M14 22q0-3 3-3h18q3 0 3 3v12q0 3-3 3H17q-3 0-3-3z" fill="none" stroke="#00b386" stroke-width="2.800"/><path d="M18 18l10-5 3 5" fill="none" stroke="#00b386" stroke-width="2.600" stroke-linejoin="round"/><rect x="30.500" y="24" width="8" height="6.500" rx="2.500" fill="#000" stroke="#00b386" stroke-width="2.400"/></svg>
<div class="ct" style="left:194px;top:309px;color:#fff">top up</div>
<div class="card" style="left:284px;top:241px;background:#00bd8b"></div>
<svg style="left:301px;top:258px" width="44" height="36" viewBox="0 0 44 36"><rect x="1.500" y="9.500" width="40" height="24" rx="2.500" fill="none" stroke="#2e3338" stroke-width="2.800"/><path d="M1.500 17h40" stroke="#2e3338" stroke-width="2.800"/><path d="M21.500 0v11M17 7l4.500 4.500L26 7" fill="none" stroke="#2e3338" stroke-width="2.400"/><path d="M29 24.500h8l-1.500 4.500h-8z" fill="#2e3338"/></svg>
<div class="ct" style="left:282px;top:309px;width:80px;color:#1c2a2a">Withdrawal</div>
<!-- grid row 2 -->
<div class="card" style="left:15px;top:374px;background:linear-gradient(160deg,#10163a 0%,#1a2348 35%,#2b3052 55%,#141833 80%,#0c0f24 100%)"></div>
<div class="ct" style="left:13px;top:404px;width:80px;color:#fff;line-height:19px">Terms and<br>Conditions</div>
<div class="card" style="left:105px;top:369px;height:109px;background:#000"></div>
<svg style="left:118px;top:376px" width="50" height="48" viewBox="0 0 50 48"><rect x="1.500" y="1.500" width="47" height="45" rx="6" fill="none" stroke="#00b386" stroke-width="2.800"/><text x="25" y="20" text-anchor="middle" font-family="Liberation Sans,sans-serif" font-weight="bold" font-size="14.500" fill="#00b386">NEW</text><path d="M8 28.500h34M8 36h24" stroke="#00b386" stroke-width="2.600"/></svg>
<div class="ct" style="left:105px;top:433px;color:#fff;line-height:19px">Latest<br>Events</div>
<div class="card" style="left:194px;top:359px;height:128px;background:#00bd8b"></div>
<svg style="left:207px;top:366px" width="50" height="50" viewBox="0 0 50 50"><circle cx="25" cy="25" r="22.500" fill="none" stroke="#3a3a3a" stroke-width="3"/><text x="25" y="37" text-anchor="middle" font-family="Liberation Sans,sans-serif" font-weight="bold" font-size="34" fill="#3a3a3a">?</text></svg>
<div class="ct" style="left:192px;top:423px;width:80px;color:#1c3a34;line-height:19px;font-size:14.500px">Frequently<br>asked<br>questions</div>
<div class="card" style="left:284px;top:374px;background:linear-gradient(170deg,#3a3a40 0%,#2f3f50 30%,#3d4a57 55%,#5d6670 80%,#3a3f46 100%)"></div>
<div class="ct" style="left:299px;top:427px;text-align:left;color:#c9cdd2;font-weight:bold;font-size:13.500px;letter-spacing:0.400px;opacity:0.850;overflow:hidden;width:61px">&nbsp;About Us</div>
<div class="ct" style="left:284px;top:414px;color:#fff">about Us</div>
<!-- robot -->
<svg style="left:296px;top:470px" width="72" height="64" viewBox="0 0 72 64"><defs><radialGradient id="rb" cx="0.500" cy="0.220" r="0.800"><stop offset="0" stop-color="#ffffff"/><stop offset="0.450" stop-color="#cfeff0"/><stop offset="0.800" stop-color="#45c3c8"/><stop offset="1" stop-color="#22b0ba"/></radialGradient><linearGradient id="re" x1="0" y1="0" x2="0" y2="1"><stop offset="0" stop-color="#5fd6c6"/><stop offset="0.500" stop-color="#17a79b"/><stop offset="1" stop-color="#1c8fc0"/></linearGradient></defs>
<path d="M10.500 33C10 13 23 4.500 37 4.500S60 11 61.500 24" fill="none" stroke="#2fbfae" stroke-width="1.500"/>
<path d="M65 39Q62 50 51 54" fill="none" stroke="#37c8b0" stroke-width="1.300"/><ellipse cx="49" cy="54.500" rx="3.200" ry="2.200" fill="#37c8b0"/>
<circle cx="36.300" cy="35.600" r="22" fill="url(#rb)"/><path d="M21 50l0.600 9.200 9-3.600z" fill="#2fb8bf"/>
<ellipse cx="10.200" cy="39.500" rx="4.600" ry="8.800" fill="url(#re)"/><ellipse cx="63.300" cy="31.300" rx="4.600" ry="8.300" fill="url(#re)"/>
<circle cx="25.400" cy="33" r="3.200" fill="#1c93b4"/><circle cx="45.600" cy="29.300" r="3.200" fill="#1c93b4"/>
<path d="M29.600 38.200Q35.500 44.500 43.200 36.400" fill="none" stroke="#1a55d0" stroke-width="1.200" stroke-linecap="round"/></svg>
<!-- VIP grade -->
<div class="abs" style="left:0;top:513px;width:375px;text-align:center;font-size:23px;line-height:30px;color:#111;white-space:nowrap"><span style="color:#12b08a">VIP</span>grade</div>
<div class="abs" style="left:113px;top:544px;width:150px;height:3px;background:linear-gradient(90deg,rgba(0,189,139,0),#00bd8b 50%,rgba(0,189,139,0))"></div>
<div class="abs" style="left:10px;top:549px;width:170px;height:60px;border-radius:8px;background:#e8fff9"></div>
<div class="abs" style="left:195px;top:549px;width:170px;height:60px;border-radius:8px;background:#e8fff9"></div>
<svg style="left:79px;top:565px" width="32" height="22" viewBox="0 0 32 22"><path d="M6 0h20l6 6L16 22 0 6z" fill="#3fd3b0"/><path d="M6 0h20l6 6H0z" fill="#7ff0d4"/><path d="M10 6l6 16 6-16z" fill="#25b796"/></svg>
<svg style="left:264px;top:565px" width="32" height="22" viewBox="0 0 32 22"><path d="M6 0h20l6 6L16 22 0 6z" fill="#3fd3b0"/><path d="M6 0h20l6 6H0z" fill="#7ff0d4"/><path d="M10 6l6 16 6-16z" fill="#25b796"/></svg>
<!-- nav -->
<div class="abs" style="left:0;top:587px;width:375px;height:80px;background:#00bd8b"></div>
<div class="abs" style="left:10px;top:599px;width:55px;height:55px;border-radius:50%;background:#fff"></div>
<div class="nv" style="left:0;color:#12b08a">Home</div>
<div class="nv" style="left:75px">History</div>
<div class="nv" style="left:150px">ASO</div>
<div class="nv" style="left:225px">Asset</div>
<div class="nv" style="left:300px">My</div>
</div>
<div id="console"></div>
<span class="abs" style="left:23px;top:923px;font-size:14px;line-height:20px;color:#222;white-space:nowrap">shippergold - H5</span>
<div class="abs" style="left:18px;top:947px;width:134px;height:1px;background:#3ea45f"></div>
<!-- console icons -->
<svg style="left:1006px;top:926px" width="13" height="14" viewBox="0 0 13 14"><ellipse cx="6.500" cy="8" rx="3.300" ry="4.600" fill="none" stroke="#e58e84" stroke-width="1.200"/><path d="M6.500 4v8.500M4.300 3.600c0-3 4.400-3 4.400 0M0.500 8h2.700M9.800 8h2.700M1.200 3.500l2.400 2M11.800 3.500l-2.400 2M1.200 12.800l2.400-2M11.800 12.800l-2.400-2" fill="none" stroke="#e58e84" stroke-width="1.100"/></svg>
<svg style="left:1037px;top:927px" width="13" height="13" viewBox="0 0 13 13"><path d="M2.600 2.600A5.600 5.600 0 1 1 1 7.400" fill="none" stroke="#9db5a8" stroke-width="1.200"/><path d="M0.800 0.600l1 2.800 2.800-.6" fill="none" stroke="#9db5a8" stroke-width="1.100"/><path d="M5 4l4.200 2.600L5 9.200z" fill="#9db5a8"/></svg>
<svg style="left:1067px;top:927px" width="12" height="12" viewBox="0 0 12 12"><rect x="0.500" y="0.500" width="11" height="11" fill="none" stroke="#cf8078" stroke-width="1"/><rect x="2" y="2" width="8" height="8" fill="#cb807a"/></svg>
<svg style="left:1096px;top:926px" width="15" height="13" viewBox="0 0 15 13"><path d="M8.600 1.600H0.600v10.800h12.800V6.600" fill="none" stroke="#97803f" stroke-width="1.200"/><path d="M3 4.800l2.400 2.200L3 9.200M6.800 9.500h3.200" fill="none" stroke="#6b5a2e" stroke-width="1.100"/><path d="M10 2.600h4.600M12.300 0.300v4.600" stroke="#6b5a2e" stroke-width="1.200"/></svg>
<svg style="left:1126px;top:929px" width="15" height="8" viewBox="0 0 15 8"><path d="M0.700 7.400L7.500 1l6.800 6.400" fill="none" stroke="#8f7a42" stroke-width="1.600"/></svg>
<svg style="left:1155px;top:927px" width="16" height="12" viewBox="0 0 16 12"><path d="M1 1l6.600 9.600M7.600 1L1 10.600" stroke="#6b5a2e" stroke-width="1.600"/><path d="M12.400 0.600v9.600M9.800 7.600l2.600 2.800L15 7.600" fill="none" stroke="#6b5a2e" stroke-width="1.500"/></svg>
<div id="log">
<div style="color:#e0544c">---&gt; at pages/login/login.vue</div>
<div><span class="tm">13:00:34.056</span> <span style="font-size:16px">请求</span> [object] <span class="lk">{&quot;code&quot;:1,&quot;data&quot;:[{&quot;__ob__&quot;:{&quot;dep&quot;:{&quot;id&quot;:3011,&quot;subs&quot;:[]},&quot;value&quot;:{&quot;__ob__&quot;:{&quot;dep&quot;:{&quot;id&quot;:3011,&quot;subs&quot;</span></div>
<div><span class="lk">:&quot;Objec...}</span>   <span class="lk">at pages/index/index.vue:313</span></div>
<div><span class="tm">13:00:34.115</span> &lt;p style=&quot;text-align: center;&quot;&gt;&lt;img alt=&quot;&quot; s<span>rc</span>=&quot;<span class="lk">https://admin.studiomosaicseo.com/upload/4e3fec55951bc471/0927a6</span></div>
<div><span class="lk">60f6bef9bb.png</span>&quot; style=&quot;max-width:100%;border:0&quot; /&gt;&lt;img alt=&quot;&quot; s<span>rc</span>=&quot;<span class="lk">https://newadmin.jqdkkk.com/upload/4e3fec55951bc471/0927a6</span></div>
<div><span class="lk">60f6bef9bb.png</span>&quot; style=&quot;max-width:100%;border:0&quot; /&gt;&lt;img alt=&quot;&quot; s<span>rc</span>=&quot;<span class="lk">https://newadmin.jqdkkk.com/upload/4e3fec55951bc471/0927a6</span></div>
</div>
<div class="abs" style="left:1176px;top:1083px;width:8px;height:15px;background:#fbf6e4"></div>
<div id="status"></div>
<svg style="left:29px;top:1106px" width="14" height="14" viewBox="0 0 14 14"><circle cx="7" cy="7" r="6.300" fill="none" stroke="#a9a9a9" stroke-width="1.200"/><circle cx="7" cy="5.300" r="2.300" fill="#a9a9a9"/><path d="M2.800 11.300c.6-3 7.800-3 8.400 0-2.400 2.300-6 2.300-8.400 0z" fill="#a9a9a9"/></svg>
<span class="st" style="left:49px;color:#2aa735">未登录</span>
<svg style="left:151px;top:1107px" width="13" height="11" viewBox="0 0 13 11"><rect x="0.500" y="0.500" width="2" height="2" fill="none" stroke="#a89a70" stroke-width="0.900"/><rect x="0.500" y="4.500" width="2" height="2" fill="none" stroke="#a89a70" stroke-width="0.900"/><rect x="0.500" y="8.500" width="2" height="2" fill="none" stroke="#a89a70" stroke-width="0.900"/><path d="M4.500 1.500h8.500M4.500 5.500h8.500M4.500 9.500h8.500" stroke="#a89a70" stroke-width="1.200"/></svg>
<svg style="left:176px;top:1107px" width="13" height="11" viewBox="0 0 13 11"><rect x="0.550" y="0.550" width="11.900" height="9.900" fill="none" stroke="#8a7a4a" stroke-width="1.100"/><path d="M3 3.200l2 2-2 2M6.500 7.500h3" fill="none" stroke="#8a7a4a" stroke-width="1"/></svg>
<span class="st" style="left:1255px">语法提示库</span>
<span class="st" style="left:1340px">行:6&nbsp;&nbsp;列:46</span>
<span class="st" style="left:1428px">UTF-8</span>
<span class="st" style="left:1488px">JavaScript</span>
<svg style="left:1569px;top:1106px" width="16" height="14" viewBox="0 0 16 14"><circle cx="6.500" cy="7.500" r="6" fill="#a99a6c"/><path d="M6.500 4v6M4 7.800l2.500 2.500L9 7.800" fill="none" stroke="#fffefa" stroke-width="1.300"/><circle cx="13" cy="2.500" r="2.300" fill="#ee3322"/></svg>
<svg style="left:1601px;top:1106px" width="13" height="14" viewBox="0 0 13 14"><path d="M6.500 0.500c-3 0-4.300 2.200-4.300 4.600v3L0.500 10.800h12L10.800 8.100v-3c0-2.400-1.300-4.600-4.300-4.600z" fill="#a99a6c"/><path d="M4.800 12h3.400c0 2-3.400 2-3.400 0z" fill="#a99a6c"/></svg>
<div class="wm" style="left:48px;top:318px">515源码 515ym.com</div>
<div class="wm" style="left:1114.5px;top:585px">515源码 515ym.com</div>
<svg style="left:0;top:0" width="1640" height="1126" viewBox="0 0 1640 1126"><circle cx="820.7" cy="563.2" r="139" fill="none" stroke="#f01414" stroke-width="6"/><text x="714.7" y="583.8" transform="rotate(-101.0 714.7 583.8)" text-anchor="middle" font-family="Liberation Sans,sans-serif" font-weight="bold" font-size="26" fill="#f01414">w</text><text x="713.1" y="553.8" transform="rotate(-85.0 713.1 553.8)" text-anchor="middle" font-family="Liberation Sans,sans-serif" font-weight="bold" font-size="26" fill="#f01414">w</text><text x="719.9" y="524.5" transform="rotate(-69.0 719.9 524.5)" text-anchor="middle" font-family="Liberation Sans,sans-serif" font-weight="bold" font-size="26" fill="#f01414">w</text><text x="734.4" y="498.2" transform="rotate(-53.0 734.4 498.2)" text-anchor="middle" font-family="Liberation Sans,sans-serif" font-weight="bold" font-size="26" fill="#f01414">.</text><text x="755.7" y="476.9" transform="rotate(-37.0 755.7 476.9)" text-anchor="middle" font-family="Liberation Sans,sans-serif" font-weight="bold" font-size="26" fill="#f01414">5</text><text x="782.0" y="462.4" transform="rotate(-21.0 782.0 462.4)" text-anchor="middle" font-family="Liberation Sans,sans-serif" font-weight="bold" font-size="26" fill="#f01414">1</text><text x="811.3" y="455.6" transform="rotate(-5.0 811.3 455.6)" text-anchor="middle" font-family="Liberation Sans,sans-serif" font-weight="bold" font-size="26" fill="#f01414">5</text><text x="841.3" y="457.2" transform="rotate(11.0 841.3 457.2)" text-anchor="middle" font-family="Liberation Sans,sans-serif" font-weight="bold" font-size="26" fill="#f01414">y</text><text x="869.7" y="467.0" transform="rotate(27.0 869.7 467.0)" text-anchor="middle" font-family="Liberation Sans,sans-serif" font-weight="bold" font-size="26" fill="#f01414">m</text><text x="894.4" y="484.2" transform="rotate(43.0 894.4 484.2)" text-anchor="middle" font-family="Liberation Sans,sans-serif" font-weight="bold" font-size="26" fill="#f01414">.</text><text x="913.3" y="507.6" transform="rotate(59.0 913.3 507.6)" text-anchor="middle" font-family="Liberation Sans,sans-serif" font-weight="bold" font-size="26" fill="#f01414">c</text><text x="925.0" y="535.2" transform="rotate(75.0 925.0 535.2)" text-anchor="middle" font-family="Liberation Sans,sans-serif" font-weight="bold" font-size="26" fill="#f01414">o</text><text x="928.7" y="565.1" transform="rotate(91.0 928.7 565.1)" text-anchor="middle" font-family="Liberation Sans,sans-serif" font-weight="bold" font-size="26" fill="#f01414">m</text><text x="760.3" y="681.7" transform="rotate(27.0 760.3 681.7)" text-anchor="middle" font-family="Liberation Sans,sans-serif" font-style="italic" font-size="13" fill="#f01414">5</text><text x="774.4" y="687.9" transform="rotate(20.4 774.4 687.9)" text-anchor="middle" font-family="Liberation Sans,sans-serif" font-style="italic" font-size="13" fill="#f01414">1</text><text x="789.1" y="692.4" transform="rotate(13.8 789.1 692.4)" text-anchor="middle" font-family="Liberation Sans,sans-serif" font-style="italic" font-size="13" fill="#f01414">5</text><text x="804.2" y="695.2" transform="rotate(7.1 804.2 695.2)" text-anchor="middle" font-family="Liberation Sans,sans-serif" font-style="italic" font-size="13" fill="#f01414">y</text><text x="819.5" y="696.2" transform="rotate(0.5 819.5 696.2)" text-anchor="middle" font-family="Liberation Sans,sans-serif" font-style="italic" font-size="13" fill="#f01414">m</text><text x="834.9" y="695.4" transform="rotate(-6.1 834.9 695.4)" text-anchor="middle" font-family="Liberation Sans,sans-serif" font-style="italic" font-size="13" fill="#f01414">.</text><text x="850.1" y="692.9" transform="rotate(-12.8 850.1 692.9)" text-anchor="middle" font-family="Liberation Sans,sans-serif" font-style="italic" font-size="13" fill="#f01414">c</text><text x="864.8" y="688.7" transform="rotate(-19.4 864.8 688.7)" text-anchor="middle" font-family="Liberation Sans,sans-serif" font-style="italic" font-size="13" fill="#f01414">o</text><text x="879.0" y="682.7" transform="rotate(-26.0 879.0 682.7)" text-anchor="middle" font-family="Liberation Sans,sans-serif" font-style="italic" font-size="13" fill="#f01414">m</text><text x="747" y="576" font-family="Liberation Sans,sans-serif" font-weight="bold" font-size="37.500" fill="#f01414">515<tspan font-family="Noto Serif CJK SC,serif" font-weight="900" font-size="38" dx="4" letter-spacing="5">源码</tspan></text><text x="746" y="644" font-family="Liberation Sans,sans-serif" font-weight="bold" font-size="27" fill="#f01414" textLength="153">515ym. com</text></svg>
<div class="abs" style="left:0;top:0;width:1640px;height:1126px;border:1px solid #9e9e9e;border-radius:8px;pointer-events:none"></div>
</div>
</body></html>
